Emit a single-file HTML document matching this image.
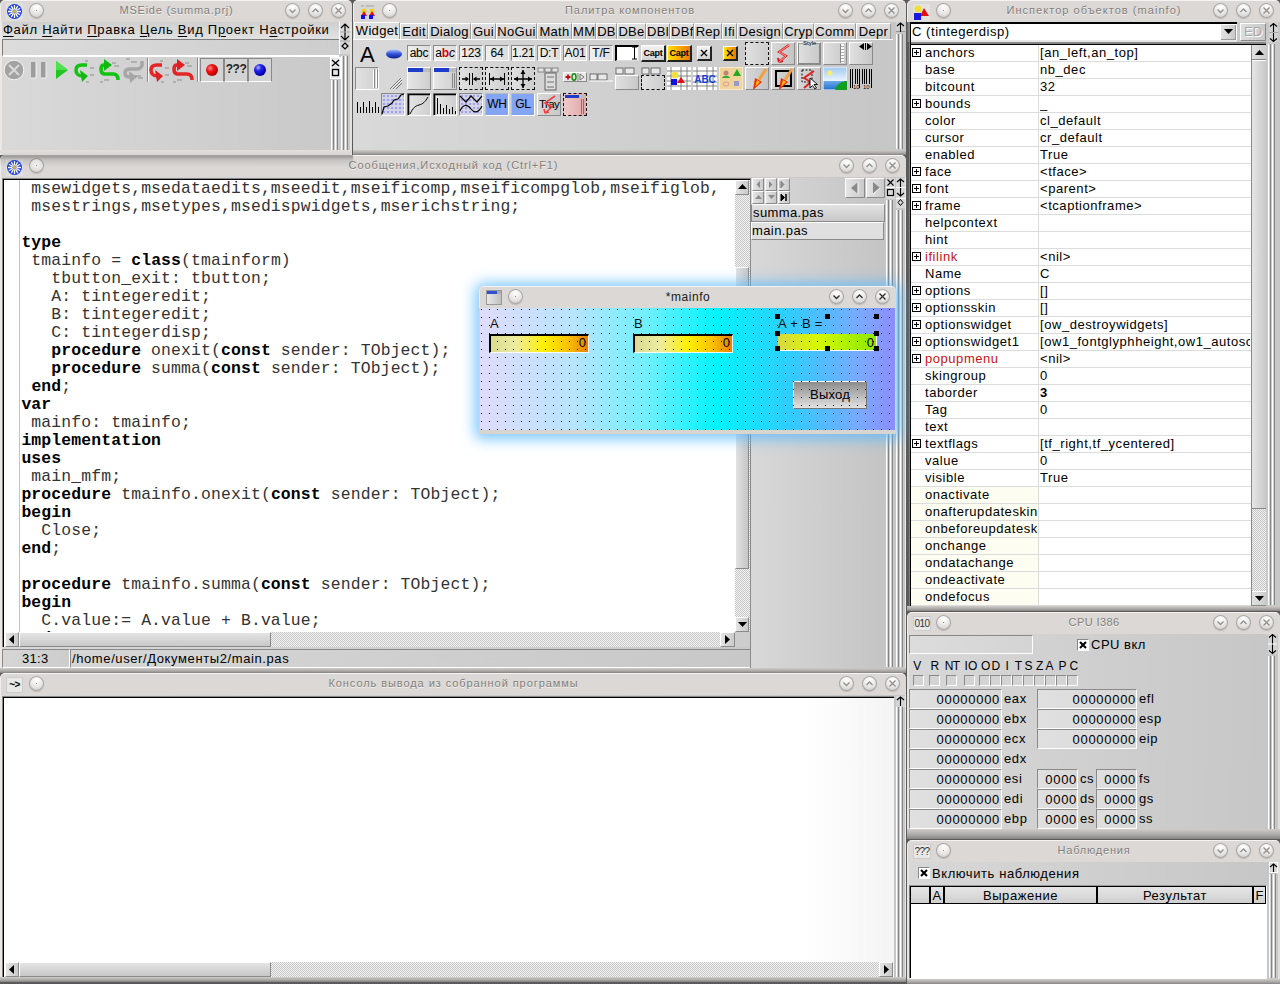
<!DOCTYPE html><html><head><meta charset="utf-8"><style>
*{margin:0;padding:0;box-sizing:border-box}
body{width:1280px;height:984px;overflow:hidden;background:#5a5a5a;font-family:"Liberation Sans",sans-serif;font-size:13px;color:#000;position:relative}
.a{position:absolute}
u{text-decoration:underline;text-underline-offset:2px}
.win{position:absolute;background:linear-gradient(90deg,#d6d6d6,#c9c9c9);overflow:hidden;border-radius:5px 5px 0 0}
.tb{position:absolute;left:0;top:0;right:0;height:22px;background:#dbd8d5;border-radius:5px 5px 0 0;border-top:1px solid #f4f3f2;border-left:1px solid #efeeec}
.tt{position:absolute;top:3.3px;left:0;right:0;text-align:center;color:#827e7b;font-size:11px;line-height:13px;letter-spacing:0.9px;text-shadow:0 1px 0 #f4f2f0;white-space:nowrap}
.cb{position:absolute;width:15px;height:15px;border-radius:50%;background:radial-gradient(circle at 50% 25%,#ffffff,#eceae8 45%,#d2d0ce 80%,#c4c2c0);box-shadow:0 0 0 1px #a8a6a4 inset,0 1px 1px rgba(0,0,0,0.15)}
.fb{position:absolute;left:0;right:0;bottom:0;background:linear-gradient(#cfccc9,#aaa8a6 60%,#858381)}
.mono{font-family:"Liberation Mono",monospace}
</style></head><body>
<div class="win" style="left:0;top:0;width:352px;height:155px;background:linear-gradient(90deg,#d9d9d9,#c8c8c8)"><div class="tb"><svg class="a" style="left:5px;top:2px" width="17" height="17" viewBox="0 0 17 17"><rect width="17" height="17" fill="#e0e0e0"/><circle cx="8.5" cy="8.5" r="7.5" fill="#1f3fd8"/><path d="M10.5 8.5L15.0 8.5" stroke="#fff" stroke-width="1.3"/><path d="M10.2 9.5L14.1 11.8" stroke="#fff" stroke-width="1.3"/><path d="M9.5 10.2L11.8 14.1" stroke="#fff" stroke-width="1.3"/><path d="M8.5 10.5L8.5 15.0" stroke="#fff" stroke-width="1.3"/><path d="M7.5 10.2L5.3 14.1" stroke="#fff" stroke-width="1.3"/><path d="M6.8 9.5L2.9 11.8" stroke="#fff" stroke-width="1.3"/><path d="M6.5 8.5L2.0 8.5" stroke="#fff" stroke-width="1.3"/><path d="M6.8 7.5L2.9 5.3" stroke="#fff" stroke-width="1.3"/><path d="M7.5 6.8L5.2 2.9" stroke="#fff" stroke-width="1.3"/><path d="M8.5 6.5L8.5 2.0" stroke="#fff" stroke-width="1.3"/><path d="M9.5 6.8L11.8 2.9" stroke="#fff" stroke-width="1.3"/><path d="M10.2 7.5L14.1 5.2" stroke="#fff" stroke-width="1.3"/><circle cx="8.5" cy="8.5" r="2" fill="#c8b040"/></svg><div class="cb" style="left:28.2px;top:2px"></div><div class="a" style="left:35px;top:9px;width:1px;height:1px;background:#888"></div><div class="tt" style="letter-spacing:0.76px">MSEide (summa.prj)</div><div class="cb" style="left:284px;top:2px"></div><svg class="a" style="left:284px;top:2px" width="15" height="15"><path d="M4.5 6.5L7.5 9.5L10.5 6.5" stroke="#8e8e8e" stroke-width="1.3" fill="none"/></svg><div class="cb" style="left:307px;top:2px"></div><svg class="a" style="left:307px;top:2px" width="15" height="15"><path d="M4.5 9L7.5 6L10.5 9" stroke="#8e8e8e" stroke-width="1.3" fill="none"/></svg><div class="cb" style="left:330px;top:2px"></div><svg class="a" style="left:330px;top:2px" width="15" height="15"><path d="M4.5 4.5L10.5 10.5M10.5 4.5L4.5 10.5" stroke="#8e8e8e" stroke-width="1.3" fill="none"/></svg></div><div class="a" style="left:0;top:22px;width:351px;height:17px;background:linear-gradient(#cfcfcf,#e2e2e2)"></div><div class="a ui" style="left:3px;top:22px;white-space:nowrap;font-size:13px;letter-spacing:0.72px;line-height:15px"><u>Ф</u>айл <u>Н</u>айти <u>П</u>равка <u>Ц</u>ель <u>В</u>ид П<u>р</u>оект Н<u>а</u>стройки</div><div class="a" style="left:339px;top:22px;width:11px;height:32px;background:#d8d8d8;border-left:1px solid #fff"></div><svg class="a" style="left:340px;top:23px" width="10" height="30" viewBox="0 0 10 30"><path d="M5 1V17M1 5L5 1L9 5M5 13V17M1 13L5 17L9 13" stroke="#000" stroke-width="1.2" fill="none"/><path d="M0 9H10M0 18H10" stroke="#aaa"/><path d="M5 20L8 23L5 26L2 23Z" stroke="#000" fill="none" stroke-width="1.2"/></svg><div class="a" style="left:2px;top:39px;width:337px;height:18px;background:linear-gradient(90deg,#dcdcdc,#cdcdcd);border-top:1px solid #7c7c7c;border-left:1px solid #7c7c7c;border-bottom:2px solid #fff"></div><svg class="a" style="left:0;top:56px" width="330" height="30" viewBox="0 0 330 30"><circle cx="14" cy="14" r="9.8" fill="#a3a3a3" stroke="#fff" stroke-width="0.8"/><path d="M9 9L19 19M19 9L9 19" stroke="#d9d9d9" stroke-width="2"/><rect x="31" y="6" width="5" height="16" fill="#9d9d9d"/><rect x="41" y="6" width="5" height="16" fill="#9d9d9d"/><path d="M36 6V22M46 6V22M31 22H36M41 22H46" stroke="#fff" stroke-width="0.8"/><path d="M56 5L68 14L56 23Z" fill="#22c522"/><path d="M56 5L68 14L56 14Z" fill="#4ee04e"/><path d="M87 9H82C77 9 76 12 76 14C76 17 78 20 82 20" stroke="#0fc40f" stroke-width="3.5" fill="none"/><path d="M80 14L88 20L82 26Z" fill="#10b910"/><path d="M85 5h3M90 12h4M90 19h4M86 26h3" stroke="#707070" stroke-width="0.7"/><path d="M104 9C100 9 100 17 104 18H113C117 18 118 21 118 24" stroke="#0fc40f" stroke-width="3.5" fill="none"/><path d="M104 3L112 9L104 15Z" fill="#10b910"/><path d="M112 7h4M114 10h5M100 26h3M104 24h5" stroke="#707070" stroke-width="0.7"/><path d="M142 5V9C142 11 140 13 136 13H130C126 13 125 15 125 17C125 20 127 21 130 21" stroke="#a6a6a6" stroke-width="3.5" fill="none"/><path d="M129 15L137 21L130 27Z" fill="#a6a6a6"/><path d="M126 3h4M131 6h6M135 20h6M138 22h5" stroke="#707070" stroke-width="0.7"/><path d="M147.5 2V26" stroke="#8a8a8a"/><path d="M148.5 2V26" stroke="#fff"/><path d="M162 9H157C152 9 151 12 151 14C151 17 153 20 157 20" stroke="#e52626" stroke-width="3.5" fill="none"/><path d="M155 14L163 20L157 26Z" fill="#dd2020"/><path d="M160 5h3M165 12h4M165 19h4M161 26h3" stroke="#707070" stroke-width="0.7"/><path d="M177 9C173 9 173 17 177 18H187C191 18 192 21 192 24" stroke="#e52626" stroke-width="3.5" fill="none"/><path d="M177 3L185 9L177 15Z" fill="#dd2020"/><path d="M185 7h4M187 10h5M173 26h3M177 24h5" stroke="#707070" stroke-width="0.7"/><path d="M197.5 2V26" stroke="#8a8a8a"/><path d="M198.5 2V26" stroke="#fff"/></svg><div class="a" style="left:200px;top:58px;width:24px;height:24px;border:1px solid #fff;border-right-color:#8a8a8a;border-bottom-color:#fff;border-top-color:#8a8a8a;border-left-color:#8a8a8a;background:#d3d3d3"></div><div class="a" style="left:224px;top:58px;width:24px;height:24px;border:1px solid #fff;border-right-color:#8a8a8a;border-bottom-color:#fff;border-top-color:#8a8a8a;border-left-color:#8a8a8a;background:#d3d3d3"></div><div class="a" style="left:248px;top:58px;width:24px;height:24px;border:1px solid #fff;border-right-color:#8a8a8a;border-bottom-color:#fff;border-top-color:#8a8a8a;border-left-color:#8a8a8a;background:#d3d3d3"></div><svg class="a" style="left:200px;top:58px" width="72" height="24" viewBox="0 0 72 24"><defs><radialGradient id="rg1" cx="0.35" cy="0.35" r="0.7"><stop offset="0" stop-color="#ff9090"/><stop offset="0.4" stop-color="#f01414"/><stop offset="1" stop-color="#b00000"/></radialGradient><radialGradient id="bg1" cx="0.35" cy="0.3" r="0.7"><stop offset="0" stop-color="#b0b0ff"/><stop offset="0.4" stop-color="#2222ee"/><stop offset="1" stop-color="#0000a0"/></radialGradient></defs><circle cx="12" cy="12" r="6" fill="url(#rg1)"/><circle cx="60" cy="12" r="6" fill="url(#bg1)"/></svg><div class="a" style="left:224px;top:62px;width:24px;text-align:center;font-weight:bold;font-size:12px;letter-spacing:-0.5px;color:#222">???</div><svg class="a" style="left:330px;top:57px" width="11" height="22" viewBox="0 0 11 22"><rect x="0.5" y="0.5" width="10" height="21" fill="#e8e8e8" stroke="#fff"/><path d="M2 3L9 9M9 3L2 9" stroke="#000" stroke-width="1.3"/><rect x="2.5" y="12.5" width="6" height="6" fill="none" stroke="#000" stroke-width="1.3"/></svg><div class="a" style="left:331px;top:80px;width:8px;height:70px;background:repeating-linear-gradient(90deg,#fff 0,#fff 1px,#d2d2d2 1px,#d2d2d2 2px,#858585 2px,#858585 3px,#cacaca 3px,#cacaca 4px)"></div><div class="a" style="left:341px;top:56px;width:8px;height:94px;background:repeating-linear-gradient(90deg,#fff 0,#fff 1px,#d2d2d2 1px,#d2d2d2 2px,#858585 2px,#858585 3px,#cacaca 3px,#cacaca 4px)"></div><div class="a" style="left:0;top:22px;width:2px;bottom:0;background:#ebe9e7"></div><div class="a" style="right:0;top:22px;width:2.5px;bottom:0;background:#e4e1de"></div><div class="a" style="left:0;right:0;bottom:0;height:5px;background:linear-gradient(#e2dfdc,#d8d4d1);border-radius:0 0 4px 4px"></div></div>
<div class="win" style="left:353px;top:0;width:553px;height:155px;background:linear-gradient(90deg,#d9d9d9,#c6c6c6)"><div class="tb"><svg class="a" style="left:6px;top:3px" width="17" height="17" viewBox="0 0 17 17"><rect width="17" height="17" fill="#d6d6d6"/><circle cx="4" cy="7" r="2.6" fill="#e8d030"/><circle cx="12" cy="7" r="2.6" fill="#e8d030"/><path d="M4 7L7 12H1Z" fill="#e01010"/><path d="M12 7L15 12H9Z" fill="#e01010"/><rect x="1" y="11" width="4" height="4" fill="#1010e0"/><rect x="9" y="11" width="4" height="4" fill="#1010e0"/><path d="M1 2h3M6 2h8" stroke="#999" stroke-width="0.8"/></svg><div class="cb" style="left:28.2px;top:2px"></div><div class="a" style="left:35px;top:9px;width:1px;height:1px;background:#888"></div><div class="tt" style="letter-spacing:0.9px">Палитра компонентов</div><div class="cb" style="left:484px;top:2px"></div><svg class="a" style="left:484px;top:2px" width="15" height="15"><path d="M4.5 6.5L7.5 9.5L10.5 6.5" stroke="#8e8e8e" stroke-width="1.3" fill="none"/></svg><div class="cb" style="left:507px;top:2px"></div><svg class="a" style="left:507px;top:2px" width="15" height="15"><path d="M4.5 9L7.5 6L10.5 9" stroke="#8e8e8e" stroke-width="1.3" fill="none"/></svg><div class="cb" style="left:530px;top:2px"></div><svg class="a" style="left:530px;top:2px" width="15" height="15"><path d="M4.5 4.5L10.5 10.5M10.5 4.5L4.5 10.5" stroke="#8e8e8e" stroke-width="1.3" fill="none"/></svg></div><div class="a" style="left:0;top:22px;width:540px;height:18px;border-bottom:1px solid #fff"></div><div class="a" style="left:1px;top:22px;width:46px;height:17px;background:linear-gradient(#dcdcdc,#e6e6e6);border-left:1px solid #fff;border-top:1px solid #fff;border-right:1px solid #9a9a9a;text-align:center;font-size:13px;line-height:16px;letter-spacing:0.3px;white-space:nowrap;overflow:hidden">Widget</div><div class="a" style="left:47px;top:23px;width:28px;height:16px;background:linear-gradient(#e0e0e0,#cfcfcf);border-left:1px solid #fff;border-top:1px solid #fff;border-right:1px solid #9a9a9a;text-align:center;font-size:13px;line-height:16px;letter-spacing:0.3px;white-space:nowrap;overflow:hidden">Edit</div><div class="a" style="left:75px;top:23px;width:43px;height:16px;background:linear-gradient(#e0e0e0,#cfcfcf);border-left:1px solid #fff;border-top:1px solid #fff;border-right:1px solid #9a9a9a;text-align:center;font-size:13px;line-height:16px;letter-spacing:0.3px;white-space:nowrap;overflow:hidden">Dialog</div><div class="a" style="left:118px;top:23px;width:25px;height:16px;background:linear-gradient(#e0e0e0,#cfcfcf);border-left:1px solid #fff;border-top:1px solid #fff;border-right:1px solid #9a9a9a;text-align:center;font-size:13px;line-height:16px;letter-spacing:0.3px;white-space:nowrap;overflow:hidden">Gui</div><div class="a" style="left:143px;top:23px;width:41px;height:16px;background:linear-gradient(#e0e0e0,#cfcfcf);border-left:1px solid #fff;border-top:1px solid #fff;border-right:1px solid #9a9a9a;text-align:center;font-size:13px;line-height:16px;letter-spacing:0.3px;white-space:nowrap;overflow:hidden">NoGui</div><div class="a" style="left:184px;top:23px;width:35px;height:16px;background:linear-gradient(#e0e0e0,#cfcfcf);border-left:1px solid #fff;border-top:1px solid #fff;border-right:1px solid #9a9a9a;text-align:center;font-size:13px;line-height:16px;letter-spacing:0.3px;white-space:nowrap;overflow:hidden">Math</div><div class="a" style="left:219px;top:23px;width:24px;height:16px;background:linear-gradient(#e0e0e0,#cfcfcf);border-left:1px solid #fff;border-top:1px solid #fff;border-right:1px solid #9a9a9a;text-align:center;font-size:13px;line-height:16px;letter-spacing:0.3px;white-space:nowrap;overflow:hidden">MM</div><div class="a" style="left:243px;top:23px;width:21px;height:16px;background:linear-gradient(#e0e0e0,#cfcfcf);border-left:1px solid #fff;border-top:1px solid #fff;border-right:1px solid #9a9a9a;text-align:center;font-size:13px;line-height:16px;letter-spacing:0.3px;white-space:nowrap;overflow:hidden">DB</div><div class="a" style="left:264px;top:23px;width:29px;height:16px;background:linear-gradient(#e0e0e0,#cfcfcf);border-left:1px solid #fff;border-top:1px solid #fff;border-right:1px solid #9a9a9a;text-align:center;font-size:13px;line-height:16px;letter-spacing:0.3px;white-space:nowrap;overflow:hidden">DBe</div><div class="a" style="left:293px;top:23px;width:24px;height:16px;background:linear-gradient(#e0e0e0,#cfcfcf);border-left:1px solid #fff;border-top:1px solid #fff;border-right:1px solid #9a9a9a;text-align:center;font-size:13px;line-height:16px;letter-spacing:0.3px;white-space:nowrap;overflow:hidden">DBl</div><div class="a" style="left:317px;top:23px;width:24px;height:16px;background:linear-gradient(#e0e0e0,#cfcfcf);border-left:1px solid #fff;border-top:1px solid #fff;border-right:1px solid #9a9a9a;text-align:center;font-size:13px;line-height:16px;letter-spacing:0.3px;white-space:nowrap;overflow:hidden">DBf</div><div class="a" style="left:341px;top:23px;width:28px;height:16px;background:linear-gradient(#e0e0e0,#cfcfcf);border-left:1px solid #fff;border-top:1px solid #fff;border-right:1px solid #9a9a9a;text-align:center;font-size:13px;line-height:16px;letter-spacing:0.3px;white-space:nowrap;overflow:hidden">Rep</div><div class="a" style="left:369px;top:23px;width:15px;height:16px;background:linear-gradient(#e0e0e0,#cfcfcf);border-left:1px solid #fff;border-top:1px solid #fff;border-right:1px solid #9a9a9a;text-align:center;font-size:13px;line-height:16px;letter-spacing:0.3px;white-space:nowrap;overflow:hidden">Ifi</div><div class="a" style="left:384px;top:23px;width:46px;height:16px;background:linear-gradient(#e0e0e0,#cfcfcf);border-left:1px solid #fff;border-top:1px solid #fff;border-right:1px solid #9a9a9a;text-align:center;font-size:13px;line-height:16px;letter-spacing:0.3px;white-space:nowrap;overflow:hidden">Design</div><div class="a" style="left:430px;top:23px;width:31px;height:16px;background:linear-gradient(#e0e0e0,#cfcfcf);border-left:1px solid #fff;border-top:1px solid #fff;border-right:1px solid #9a9a9a;text-align:center;font-size:13px;line-height:16px;letter-spacing:0.3px;white-space:nowrap;overflow:hidden">Cryp</div><div class="a" style="left:461px;top:23px;width:42px;height:16px;background:linear-gradient(#e0e0e0,#cfcfcf);border-left:1px solid #fff;border-top:1px solid #fff;border-right:1px solid #9a9a9a;text-align:center;font-size:13px;line-height:16px;letter-spacing:0.3px;white-space:nowrap;overflow:hidden">Comm</div><div class="a" style="left:503px;top:23px;width:35px;height:16px;background:linear-gradient(#e0e0e0,#cfcfcf);border-left:1px solid #fff;border-top:1px solid #fff;border-right:1px solid #9a9a9a;text-align:center;font-size:13px;line-height:16px;letter-spacing:0.3px;white-space:nowrap;overflow:hidden">Depr</div><div class="a" style="left:543px;top:22px;width:9px;height:10px;background:#d0d0d0;border-bottom:1px solid #999"></div><svg class="a" style="left:543px;top:22px" width="9" height="10"><path d="M4.5 1V10M1 4L4.5 1L8 4" stroke="#000" stroke-width="1.1" fill="none"/></svg><div class="a" style="left:543px;top:34px;width:8px;height:115px;background:repeating-linear-gradient(90deg,#fff 0,#fff 1px,#d2d2d2 1px,#d2d2d2 2px,#858585 2px,#858585 3px,#cacaca 3px,#cacaca 4px)"></div><div class="a" style="left:7px;top:44px;font-size:22px;white-space:nowrap;line-height:1;font-weight:normal">A</div><svg class="a" style="left:32px;top:48px" width="18" height="12"><defs><linearGradient id="el" x1="0" y1="0" x2="0" y2="1"><stop offset="0" stop-color="#a8c0ff"/><stop offset="0.5" stop-color="#3050d8"/><stop offset="1" stop-color="#0a2090"/></linearGradient></defs><ellipse cx="9" cy="6" rx="8" ry="4.5" fill="url(#el)"/></svg><div class="a" style="left:54px;top:45px;width:24px;height:16px;background:linear-gradient(90deg,#f0f0f0,#dcdcdc);border-top:1px solid #8a8a8a;border-left:1px solid #8a8a8a;border-right:1px solid #fff;border-bottom:1px solid #fff"><div style="text-align:center;font-size:12px;line-height:14px;letter-spacing:-0.2px">abc</div></div><div class="a" style="left:80px;top:45px;width:24px;height:16px;background:linear-gradient(90deg,#f0f0f0,#dcdcdc);border-top:1px solid #8a8a8a;border-left:1px solid #8a8a8a;border-right:1px solid #fff;border-bottom:1px solid #fff"><div style="text-align:center;font-size:12px;line-height:14px;letter-spacing:-0.2px">a<b style="color:#e00000">b</b><i>c</i></div></div><div class="a" style="left:106px;top:45px;width:24px;height:16px;background:linear-gradient(90deg,#f0f0f0,#dcdcdc);border-top:1px solid #8a8a8a;border-left:1px solid #8a8a8a;border-right:1px solid #fff;border-bottom:1px solid #fff"><div style="text-align:center;font-size:12px;line-height:14px;letter-spacing:-0.2px">123</div></div><div class="a" style="left:132px;top:45px;width:24px;height:16px;background:linear-gradient(90deg,#f0f0f0,#dcdcdc);border-top:1px solid #8a8a8a;border-left:1px solid #8a8a8a;border-right:1px solid #fff;border-bottom:1px solid #fff"><div style="text-align:center;font-size:12px;line-height:14px;letter-spacing:-0.2px">64</div></div><div class="a" style="left:158px;top:45px;width:24px;height:16px;background:linear-gradient(90deg,#f0f0f0,#dcdcdc);border-top:1px solid #8a8a8a;border-left:1px solid #8a8a8a;border-right:1px solid #fff;border-bottom:1px solid #fff"><div style="text-align:center;font-size:12px;line-height:14px;letter-spacing:-0.2px">1.21</div></div><div class="a" style="left:184px;top:45px;width:24px;height:16px;background:linear-gradient(90deg,#f0f0f0,#dcdcdc);border-top:1px solid #8a8a8a;border-left:1px solid #8a8a8a;border-right:1px solid #fff;border-bottom:1px solid #fff"><div style="text-align:center;font-size:12px;line-height:14px;letter-spacing:-0.2px">D:T</div></div><div class="a" style="left:210px;top:45px;width:24px;height:16px;background:linear-gradient(90deg,#f0f0f0,#dcdcdc);border-top:1px solid #8a8a8a;border-left:1px solid #8a8a8a;border-right:1px solid #fff;border-bottom:1px solid #fff"><div style="text-align:center;font-size:12px;line-height:14px;letter-spacing:-0.2px">A01</div></div><div class="a" style="left:236px;top:45px;width:24px;height:16px;background:linear-gradient(90deg,#f0f0f0,#dcdcdc);border-top:1px solid #8a8a8a;border-left:1px solid #8a8a8a;border-right:1px solid #fff;border-bottom:1px solid #fff"><div style="text-align:center;font-size:12px;line-height:14px;letter-spacing:-0.2px">T/F</div></div><div class="a" style="left:262px;top:45px;width:24px;height:16px;background:#fff;border-top:2px solid #000;border-left:2px solid #000;border-bottom:1px solid #ddd;border-right:1px solid #ddd"></div><svg class="a" style="left:279px;top:46px" width="5" height="14"><path d="M0 1H5M0 13H5M2.5 1V13" stroke="#000" stroke-width="1"/></svg><div class="a" style="left:288px;top:45px;width:25px;height:17px;background:linear-gradient(#f2f2f2,#d0d0d0);border:1px solid #fff;border-right:2px solid #222;border-bottom:2px solid #222;font-size:9px;font-weight:bold;letter-spacing:-0.2px;text-align:center;line-height:14px">Capt</div><div class="a" style="left:314px;top:45px;width:25px;height:17px;background:linear-gradient(90deg,#ffe000,#f07800);border:1px solid #fff;border-right:2px solid #222;border-bottom:2px solid #222;font-size:9px;font-weight:bold;letter-spacing:-0.2px;text-align:center;line-height:14px">Capt</div><div class="a" style="left:344px;top:46px;width:15px;height:15px;background:linear-gradient(#f2f2f2,#d0d0d0);border:1px solid #fff;border-right:2px solid #222;border-bottom:2px solid #222"></div><svg class="a" style="left:346px;top:48px" width="10" height="10"><path d="M2 2L8 8M8 2L2 8" stroke="#000" stroke-width="1.3"/></svg><div class="a" style="left:370px;top:46px;width:15px;height:15px;background:linear-gradient(90deg,#ffe000,#f07800);border:1px solid #fff;border-right:2px solid #222;border-bottom:2px solid #222"></div><svg class="a" style="left:372px;top:48px" width="10" height="10"><path d="M2 2L8 8M8 2L2 8" stroke="#000" stroke-width="1.3"/></svg><div class="a" style="left:392px;top:42px;width:24px;height:23px;background:linear-gradient(90deg,#e0e0e0,#cdcdcd);border:1.6px dashed #111"></div><div class="a" style="left:418px;top:42px;width:24px;height:23px;background:linear-gradient(90deg,#d8d8d8,#c4c4c4);border-top:1px solid #fff;border-left:1px solid #fff;border-right:1px solid #8a8a8a;border-bottom:1px solid #8a8a8a"></div><svg class="a" style="left:420px;top:43px" width="20" height="21"><path d="M16 2L6 9L13 13L6 19M6 19L5 15M6 19L10 18" stroke="#e02020" stroke-width="2.2" fill="none"/><path d="M16 2L6 9L13 13L6 19" stroke="#fbb" stroke-width="0.8" fill="none"/></svg><div class="a" style="left:444px;top:42px;width:24px;height:23px;background:linear-gradient(90deg,#e0e0e0,#c8c8c8);border-top:1px solid #fff;border-left:1px solid #fff;border-right:1px solid #8a8a8a;border-bottom:1px solid #8a8a8a"></div><div class="a" style="left:445px;top:43px;width:22px;height:21px;border:1px solid #888;border-top:1px solid #999"></div><div class="a" style="left:450px;top:40px;font-size:6px;background:#d6d6d6">Style</div><div class="a" style="left:470px;top:42px;width:24px;height:23px;background:linear-gradient(90deg,#e0e0e0,#c8c8c8);border-top:1px solid #fff;border-left:1px solid #fff;border-right:1px solid #8a8a8a;border-bottom:1px solid #8a8a8a"></div><div class="a" style="left:487px;top:44px;width:4px;height:19px;border-left:1px solid #888;background:repeating-linear-gradient(#fff 0,#fff 2px,#aaa 2px,#aaa 3px)"></div><div class="a" style="left:496px;top:42px;width:24px;height:23px;background:linear-gradient(90deg,#e0e0e0,#c8c8c8);border-top:1px solid #fff;border-left:1px solid #fff;border-right:1px solid #8a8a8a;border-bottom:1px solid #8a8a8a"></div><svg class="a" style="left:506px;top:43px" width="13" height="7"><path d="M0 3.5L5 0V7Z M13 3.5L8 0V7Z" fill="#000"/><path d="M6.5 0V7" stroke="#000"/></svg><div class="a" style="left:2px;top:67px;width:24px;height:23px;background:linear-gradient(90deg,#e2e2e2,#cfcfcf);border-top:1px solid #8a8a8a;border-left:1px solid #8a8a8a;border-right:1px solid #fff;border-bottom:1px solid #fff"></div><div class="a" style="left:20px;top:69px;width:5px;height:19px;background:repeating-linear-gradient(90deg,#fff 0,#fff 1px,#888 1px,#888 2px,#ddd 2px,#ddd 3px)"></div><svg class="a" style="left:36px;top:77px" width="14" height="13"><path d="M1 12L12 1M4 12L13 3M7 12L13 6" stroke="#666" stroke-width="0.9"/><path d="M2 12L13 1M5 12L13 4" stroke="#fff" stroke-width="0.6"/></svg><div class="a" style="left:54px;top:67px;width:24px;height:23px;background:linear-gradient(90deg,#e6e6e6,#cfcfcf);border-top:1px solid #fff;border-left:1px solid #fff;border-right:1px solid #8a8a8a;border-bottom:1px solid #8a8a8a"></div><div class="a" style="left:55px;top:68px;width:22px;height:4px;background:linear-gradient(90deg,#1e3ccc 70%,#bbb 70%)"></div><div class="a" style="left:80px;top:67px;width:24px;height:23px;background:linear-gradient(90deg,#e6e6e6,#cfcfcf);border-top:1px solid #fff;border-left:1px solid #fff;border-right:1px solid #8a8a8a;border-bottom:1px solid #8a8a8a"></div><div class="a" style="left:81px;top:68px;width:22px;height:4px;background:linear-gradient(90deg,#1e3ccc 70%,#bbb 70%)"></div><div class="a" style="left:99px;top:73px;width:3px;height:15px;border-left:1px solid #888;border-right:1px solid #888"></div><div class="a" style="left:106px;top:67px;width:24px;height:23px;background:linear-gradient(90deg,#e0e0e0,#cdcdcd);border:1.6px dashed #111"></div><div class="a" style="left:132px;top:67px;width:24px;height:23px;background:linear-gradient(90deg,#e0e0e0,#cdcdcd);border:1.6px dashed #111"></div><div class="a" style="left:158px;top:67px;width:24px;height:23px;background:linear-gradient(90deg,#e0e0e0,#cdcdcd);border:1.6px dashed #111"></div><svg class="a" style="left:108px;top:69px" width="20" height="20"><path d="M1 10H6M14 10H19" stroke="#000" stroke-width="1.3"/><path d="M8.5 4V16M11.5 4V16" stroke="#000" stroke-width="1"/><path d="M8 10L4.5 7.5V12.5ZM12 10L15.5 7.5V12.5Z" fill="#000"/></svg><svg class="a" style="left:134px;top:69px" width="20" height="20"><path d="M2.5 4V16M17.5 4V16" stroke="#000" stroke-width="1"/><path d="M3 10H17" stroke="#000" stroke-width="1.3"/><path d="M3 10L7 7.5V12.5ZM17 10L13 7.5V12.5Z" fill="#000"/></svg><svg class="a" style="left:160px;top:69px" width="20" height="20"><path d="M10 1V19M1 10H19" stroke="#000" stroke-width="1.3"/><path d="M10 1L7.5 5H12.5ZM10 19L7.5 15H12.5ZM1 10L5 7.5V12.5ZM19 10L15 7.5V12.5Z" fill="#000"/></svg><svg class="a" style="left:184px;top:67px" width="22" height="24"><rect x="1" y="1" width="6" height="4" fill="#e4e4e4" stroke="#666" stroke-width="0.7"/><rect x="8" y="1" width="6" height="4" fill="#e4e4e4" stroke="#666" stroke-width="0.7"/><rect x="15" y="1" width="6" height="4" fill="#e4e4e4" stroke="#666" stroke-width="0.7"/><rect x="8" y="6" width="11" height="17" fill="#ddd" stroke="#555" stroke-width="0.9"/><path d="M10 10h7M10 15h7M10 20h7" stroke="#555" stroke-width="0.8"/></svg><div class="a" style="left:210px;top:72px;width:24px;height:10px;background:#e6e6e6;border:1px solid #fff;border-right-color:#888;border-bottom-color:#888"></div><svg class="a" style="left:211px;top:72px" width="22" height="10"><path d="M1.5 5H6.5M4 2.5V7.5" stroke="#c01010" stroke-width="1.8"/><ellipse cx="10" cy="5" rx="2" ry="3.2" stroke="#109010" stroke-width="1.5" fill="none"/><path d="M14 1V9" stroke="#888"/><path d="M16 2L20 5L16 8Z" fill="none" stroke="#777"/></svg><svg class="a" style="left:236px;top:73px" width="24" height="10"><rect x="1" y="1" width="7" height="6" fill="#e8e8e8" stroke="#555" stroke-width="0.8"/><rect x="9" y="1" width="9" height="6" fill="#e8e8e8" stroke="#555" stroke-width="0.8"/><path d="M1 8H24" stroke="#fff"/></svg><svg class="a" style="left:262px;top:67px" width="26" height="8"><rect x="1" y="1" width="7" height="6" fill="#e8e8e8" stroke="#555" stroke-width="0.8"/><rect x="10" y="1" width="9" height="6" fill="#e8e8e8" stroke="#555" stroke-width="0.8"/></svg><div class="a" style="left:262px;top:75px;width:24px;height:15px;background:linear-gradient(90deg,#e0e0e0,#c8c8c8);border-top:1px solid #fff;border-left:1px solid #fff;border-right:1px solid #8a8a8a;border-bottom:1px solid #8a8a8a"></div><svg class="a" style="left:288px;top:67px" width="26" height="8"><rect x="1" y="1" width="7" height="6" fill="#e8e8e8" stroke="#555" stroke-width="0.8"/><rect x="10" y="1" width="9" height="6" fill="#e8e8e8" stroke="#555" stroke-width="0.8"/></svg><div class="a" style="left:288px;top:75px;width:24px;height:15px;background:linear-gradient(90deg,#e0e0e0,#cdcdcd);border:1.6px dashed #111"></div><svg class="a" style="left:314px;top:67px" width="24" height="23"><rect width="24" height="23" fill="#fff"/><path d="M0 4H24M0 9H24M0 14H24M0 19H24M4 0V23M14 0V23M20 0V23" stroke="#777" stroke-width="0.9"/><circle cx="8" cy="8" r="3.5" fill="#f0e040"/><path d="M14 10L18 16H10Z" fill="#e01010"/><rect x="4" y="12" width="6" height="6" fill="#1010e0"/></svg><svg class="a" style="left:340px;top:67px" width="24" height="23"><rect width="24" height="23" fill="#fff"/><path d="M0 4H24M0 9H24M0 15H24M0 19H24M4 0V23M14 0V23M20 0V23" stroke="#777" stroke-width="0.9"/></svg><div class="a" style="left:340px;top:75px;width:24px;text-align:center;font-size:10px;font-weight:bold;color:#1840d8;line-height:10px">ABC</div><svg class="a" style="left:366px;top:67px" width="24" height="23"><rect width="24" height="23" fill="#f0d49a" stroke="#fff"/><circle cx="7" cy="6" r="2.5" fill="#c08080"/><path d="M3 11C4 8 10 8 11 11Z" fill="#3a3"/><path d="M18 2L14 9H22Z" fill="#2a2"/><ellipse cx="7" cy="17" rx="3" ry="2" stroke="#d99" fill="none"/><rect x="15" y="14" width="5" height="5" fill="#99c"/></svg><div class="a" style="left:392px;top:67px;width:24px;height:23px;background:linear-gradient(90deg,#d6d6d6,#c4c4c4);border-top:1px solid #fff;border-left:1px solid #fff;border-right:1px solid #8a8a8a;border-bottom:1px solid #8a8a8a"></div><svg class="a" style="left:394px;top:68px" width="22" height="22"><path d="M19 1L12 12" stroke="#f0a040" stroke-width="3"/><path d="M8 10L15 14L6 22Z" fill="#f02800"/><path d="M10 12L13 14L8 19Z" fill="#ffc000"/></svg><div class="a" style="left:418px;top:67px;width:24px;height:23px;background:linear-gradient(90deg,#d6d6d6,#c4c4c4);border-top:1px solid #fff;border-left:1px solid #fff;border-right:1px solid #8a8a8a;border-bottom:1px solid #8a8a8a"></div><div class="a" style="left:422px;top:70px;width:17px;height:17px;border:2px solid #000"></div><svg class="a" style="left:420px;top:68px" width="22" height="22"><path d="M19 1L12 12" stroke="#f0a040" stroke-width="3"/><path d="M8 10L15 14L6 22Z" fill="#f02800"/><path d="M10 12L13 14L8 19Z" fill="#ffc000"/></svg><div class="a" style="left:444px;top:67px;width:24px;height:23px;background:linear-gradient(90deg,#d6d6d6,#c4c4c4);border-top:1px solid #fff;border-left:1px solid #fff;border-right:1px solid #8a8a8a;border-bottom:1px solid #8a8a8a"></div><svg class="a" style="left:445px;top:68px" width="22" height="22"><rect x="4" y="2" width="10" height="12" fill="none" stroke="#111" stroke-dasharray="2 1.5"/><path d="M16 3L6 10L13 14L6 20" stroke="#e02020" stroke-width="2" fill="none"/><path d="M12 10L12 20L14.5 17.5L17 21L18.5 20L16 16.5H19.5Z" fill="#fff" stroke="#000" stroke-width="0.9"/></svg><svg class="a" style="left:470px;top:67px" width="24" height="23"><defs><linearGradient id="sky" x1="0" y1="0" x2="0" y2="1"><stop offset="0" stop-color="#a0c8f0"/><stop offset="0.6" stop-color="#e8f4ff"/><stop offset="0.62" stop-color="#6aa8e8"/><stop offset="1" stop-color="#2070d0"/></linearGradient></defs><rect width="24" height="23" fill="url(#sky)" stroke="#fff"/><circle cx="7" cy="6" r="2.5" fill="#f8f060"/><path d="M12 23C14 16 20 14 24 14V23Z" fill="#10a020"/></svg><svg class="a" style="left:496px;top:69px" width="24" height="20" shape-rendering="crispEdges"><path d="M1.5 0V19M3.5 0V19M6.5 0V15M8.5 0V15M10.5 0V19M13.5 0V15M15.5 0V19M17.5 0V15M20.5 0V15M22.5 0V19" stroke="#000" stroke-width="1"/><rect x="4" y="15" width="5" height="5" fill="#d0d0d0"/><rect x="14" y="15" width="6" height="5" fill="#d0d0d0"/><text x="4" y="20" font-size="6" font-family="Liberation Sans">10</text><text x="14" y="20" font-size="6" font-family="Liberation Sans">10</text></svg><svg class="a" style="left:3px;top:93px" width="24" height="23" shape-rendering="crispEdges"><path d="M1.5 20V9M4.5 20V14M7.5 20V9M10.5 20V14M13.5 20V8M16.5 20V14M19.5 20V9M22.5 20V14" stroke="#000" stroke-width="1.2"/></svg><div class="a" style="left:28px;top:93px;width:24px;height:23px;background-color:#d4d4e4;background-image:radial-gradient(circle,#9aa0ff 1.1px,transparent 1.3px);background-size:4px 4px;border:1px solid #fff;border-top-color:#888;border-left-color:#888"></div><svg class="a" style="left:28px;top:93px" width="24" height="23"><path d="M1 21L3 14L7 13L11 10L13 7L17 6L20 2L23 1" stroke="#000" stroke-width="1.2" fill="none"/></svg><div class="a" style="left:54px;top:93px;width:24px;height:23px;background:linear-gradient(90deg,#e6e6e6,#cfcfcf);border-top:1px solid #8a8a8a;border-left:1px solid #8a8a8a;border-right:1px solid #fff;border-bottom:1px solid #fff"></div><svg class="a" style="left:54px;top:93px" width="24" height="23"><path d="M1.5 22V1.5H23" stroke="#000" stroke-width="1.6" fill="none"/><path d="M3 21C6 15 8 13 12 12C16 11 18 9 21 4" stroke="#000" stroke-width="1" fill="none"/></svg><div class="a" style="left:80px;top:93px;width:24px;height:23px;background:linear-gradient(90deg,#e6e6e6,#cfcfcf);border-top:1px solid #8a8a8a;border-left:1px solid #8a8a8a;border-right:1px solid #fff;border-bottom:1px solid #fff"></div><svg class="a" style="left:80px;top:93px" width="24" height="23"><path d="M1.5 22V1.5H23" stroke="#000" stroke-width="1.6" fill="none"/><path d="M4.5 21V5M7.5 21V11M10.5 21V15M13.5 21V12M16.5 21V16M19.5 21V14M22 21V18" stroke="#000" stroke-width="1" shape-rendering="crispEdges"/></svg><div class="a" style="left:106px;top:93px;width:24px;height:23px;background-color:#d4d4e4;background-image:radial-gradient(circle,#9aa0ff 1.1px,transparent 1.3px);background-size:4px 4px;border:1px solid #fff;border-top-color:#888;border-left-color:#888"></div><svg class="a" style="left:106px;top:93px" width="24" height="23"><path d="M1 3L7 9L12 3L18 9L23 3M1 18C4 11 8 11 12 16C16 21 20 19 23 13" stroke="#000" stroke-width="1.2" fill="none"/></svg><div class="a" style="left:132px;top:93px;width:24px;height:23px;background:#84a4f4;border:1px solid #fff;border-top-color:#bbb;border-left-color:#bbb;font-size:12px;text-align:center;line-height:21px;letter-spacing:-0.3px">WH</div><div class="a" style="left:158px;top:93px;width:24px;height:23px;background:#84a4f4;border:1px solid #fff;border-top-color:#bbb;border-left-color:#bbb;font-size:12px;text-align:center;line-height:21px;letter-spacing:-0.3px">GL</div><div class="a" style="left:184px;top:93px;width:24px;height:23px;background:linear-gradient(90deg,#d8d8d8,#c8c8c8);border-top:1px solid #fff;border-left:1px solid #fff;border-right:1px solid #8a8a8a;border-bottom:1px solid #8a8a8a"></div><div class="a" style="left:184px;top:97px;width:24px;text-align:center;font-size:11.5px;letter-spacing:-0.6px;line-height:14px">Tray</div><svg class="a" style="left:186px;top:94px" width="20" height="22"><path d="M16 2L6 9L13 13L6 19M6 19L5 15M6 19L10 18" stroke="#f04040" stroke-width="1.6" fill="none"/></svg><div class="a" style="left:210px;top:93px;width:24px;height:23px;background:linear-gradient(90deg,#f0c8c8,#e0a8a8);border:1.6px dashed #111"></div><div class="a" style="left:212px;top:95px;width:20px;height:3px;background:linear-gradient(90deg,#1e3ccc 70%,#bbb 70%)"></div><div class="a" style="left:228px;top:99px;width:3px;height:15px;border-left:1px solid #777;border-right:1px solid #777"></div><div class="fb" style="height:5px"></div></div>
<div class="win" style="left:907px;top:0;width:373px;height:611px;background:linear-gradient(90deg,#d6d6d6,#c8c8c8)"><div class="tb"><svg class="a" style="left:5px;top:3px" width="17" height="17" viewBox="0 0 17 17"><rect width="17" height="17" fill="#e4e2e0"/><circle cx="5" cy="5" r="3.5" fill="#f0e030"/><path d="M11 4L16 12H7Z" fill="#e81010"/><rect x="1" y="9" width="7" height="7" fill="#1818e0"/></svg><div class="cb" style="left:28.2px;top:2px"></div><div class="a" style="left:35px;top:9px;width:1px;height:1px;background:#888"></div><div class="tt" style="letter-spacing:1.04px">Инспектор объектов (mainfo)</div><div class="cb" style="left:305px;top:2px"></div><svg class="a" style="left:305px;top:2px" width="15" height="15"><path d="M4.5 6.5L7.5 9.5L10.5 6.5" stroke="#8e8e8e" stroke-width="1.3" fill="none"/></svg><div class="cb" style="left:328px;top:2px"></div><svg class="a" style="left:328px;top:2px" width="15" height="15"><path d="M4.5 9L7.5 6L10.5 9" stroke="#8e8e8e" stroke-width="1.3" fill="none"/></svg><div class="cb" style="left:351px;top:2px"></div><svg class="a" style="left:351px;top:2px" width="15" height="15"><path d="M4.5 4.5L10.5 10.5M10.5 4.5L4.5 10.5" stroke="#8e8e8e" stroke-width="1.3" fill="none"/></svg></div><div class="a" style="left:0;top:22px;width:330px;height:20px;background:linear-gradient(90deg,#6a6a6a 0,#6a6a6a 1.5px,#8a8a8a 1.5px,#8a8a8a 3px,#000 3px,#000 4px,transparent 4px),linear-gradient(#000 0,#000 1.5px,#fff 1.5px,#fff 18px,#e8e8e8 18px)"></div><div class="a" style="left:5px;top:23px;font-size:13px;letter-spacing:0.55px;line-height:17px;white-space:nowrap">C (tintegerdisp)</div><div class="a" style="left:314px;top:25px;width:15px;height:15px;background:linear-gradient(90deg,#e2e2e2,#cacaca);border-right:1px solid #999;border-bottom:1px solid #999"></div><svg class="a" style="left:317px;top:29px" width="9" height="6"><path d="M0 0H9L4.5 5Z" fill="#000"/></svg><div class="a" style="left:333px;top:23px;width:26px;height:18px;background:linear-gradient(90deg,#dedede,#c8c8c8);border:1px solid #fff;border-right-color:#8a8a8a;border-bottom-color:#8a8a8a;color:#a8a8a8;font-size:13px;text-align:center;line-height:16px;text-shadow:1px 1px 0 #fff">ED</div><div class="a" style="left:362px;top:22px;width:9px;height:20px;background:#d4d4d4"></div><svg class="a" style="left:362px;top:23px" width="9" height="19"><path d="M4.5 0.5V18.5M1 3.5L4.5 0.5L8 3.5M1 15.5L4.5 18.5L8 15.5" stroke="#000" stroke-width="1.1" fill="none"/><path d="M0 9.5H9" stroke="#aaa"/></svg><div class="a" style="left:0;top:42px;width:359px;height:564px;background:linear-gradient(90deg,#5c5c5c 0,#5c5c5c 1.5px,#808080 1.5px,#808080 3px,#000 3px,#000 4px,transparent 4px),linear-gradient(#888 0,#888 2px,#000 2px,#000 3px,#fff 3px)"></div><div class="a" style="left:4px;top:45px;width:355px;height:561px;background:#fff;overflow:hidden"><div class="a" style="left:0;top:0px;width:127px;height:16px;background:#fff"></div><div class="a" style="left:0;top:16px;width:343px;height:1px;background:#dcdcdc"></div><svg class="a" style="left:1px;top:3px" width="9" height="9"><rect x="0.5" y="0.5" width="8" height="8" fill="none" stroke="#000"/><path d="M2 4.5H7M4.5 2V7" stroke="#000"/></svg><div class="a" style="left:14px;top:-1px;width:113px;overflow:hidden;font-size:13px;letter-spacing:0.55px;line-height:17px;white-space:nowrap;color:#000">anchors</div><div class="a" style="left:129px;top:-1px;width:210px;overflow:hidden;font-size:13px;letter-spacing:0.55px;line-height:17px;white-space:nowrap">[an_left,an_top]</div><div class="a" style="left:0;top:17px;width:127px;height:16px;background:#fff"></div><div class="a" style="left:0;top:33px;width:343px;height:1px;background:#dcdcdc"></div><div class="a" style="left:14px;top:16px;width:113px;overflow:hidden;font-size:13px;letter-spacing:0.55px;line-height:17px;white-space:nowrap;color:#000">base</div><div class="a" style="left:129px;top:16px;width:210px;overflow:hidden;font-size:13px;letter-spacing:0.55px;line-height:17px;white-space:nowrap">nb_dec</div><div class="a" style="left:0;top:34px;width:127px;height:16px;background:#fff"></div><div class="a" style="left:0;top:50px;width:343px;height:1px;background:#dcdcdc"></div><div class="a" style="left:14px;top:33px;width:113px;overflow:hidden;font-size:13px;letter-spacing:0.55px;line-height:17px;white-space:nowrap;color:#000">bitcount</div><div class="a" style="left:129px;top:33px;width:210px;overflow:hidden;font-size:13px;letter-spacing:0.55px;line-height:17px;white-space:nowrap">32</div><div class="a" style="left:0;top:51px;width:127px;height:16px;background:#fff"></div><div class="a" style="left:0;top:67px;width:343px;height:1px;background:#dcdcdc"></div><svg class="a" style="left:1px;top:54px" width="9" height="9"><rect x="0.5" y="0.5" width="8" height="8" fill="none" stroke="#000"/><path d="M2 4.5H7M4.5 2V7" stroke="#000"/></svg><div class="a" style="left:14px;top:50px;width:113px;overflow:hidden;font-size:13px;letter-spacing:0.55px;line-height:17px;white-space:nowrap;color:#000">bounds</div><div class="a" style="left:129px;top:50px;width:210px;overflow:hidden;font-size:13px;letter-spacing:0.55px;line-height:17px;white-space:nowrap">_</div><div class="a" style="left:0;top:68px;width:127px;height:16px;background:#fff"></div><div class="a" style="left:0;top:84px;width:343px;height:1px;background:#dcdcdc"></div><div class="a" style="left:14px;top:67px;width:113px;overflow:hidden;font-size:13px;letter-spacing:0.55px;line-height:17px;white-space:nowrap;color:#000">color</div><div class="a" style="left:129px;top:67px;width:210px;overflow:hidden;font-size:13px;letter-spacing:0.55px;line-height:17px;white-space:nowrap">cl_default</div><div class="a" style="left:0;top:85px;width:127px;height:16px;background:#fff"></div><div class="a" style="left:0;top:101px;width:343px;height:1px;background:#dcdcdc"></div><div class="a" style="left:14px;top:84px;width:113px;overflow:hidden;font-size:13px;letter-spacing:0.55px;line-height:17px;white-space:nowrap;color:#000">cursor</div><div class="a" style="left:129px;top:84px;width:210px;overflow:hidden;font-size:13px;letter-spacing:0.55px;line-height:17px;white-space:nowrap">cr_default</div><div class="a" style="left:0;top:102px;width:127px;height:16px;background:#fff"></div><div class="a" style="left:0;top:118px;width:343px;height:1px;background:#dcdcdc"></div><div class="a" style="left:14px;top:101px;width:113px;overflow:hidden;font-size:13px;letter-spacing:0.55px;line-height:17px;white-space:nowrap;color:#000">enabled</div><div class="a" style="left:129px;top:101px;width:210px;overflow:hidden;font-size:13px;letter-spacing:0.55px;line-height:17px;white-space:nowrap">True</div><div class="a" style="left:0;top:119px;width:127px;height:16px;background:#fff"></div><div class="a" style="left:0;top:135px;width:343px;height:1px;background:#dcdcdc"></div><svg class="a" style="left:1px;top:122px" width="9" height="9"><rect x="0.5" y="0.5" width="8" height="8" fill="none" stroke="#000"/><path d="M2 4.5H7M4.5 2V7" stroke="#000"/></svg><div class="a" style="left:14px;top:118px;width:113px;overflow:hidden;font-size:13px;letter-spacing:0.55px;line-height:17px;white-space:nowrap;color:#000">face</div><div class="a" style="left:129px;top:118px;width:210px;overflow:hidden;font-size:13px;letter-spacing:0.55px;line-height:17px;white-space:nowrap">&lt;tface&gt;</div><div class="a" style="left:0;top:136px;width:127px;height:16px;background:#fff"></div><div class="a" style="left:0;top:152px;width:343px;height:1px;background:#dcdcdc"></div><svg class="a" style="left:1px;top:139px" width="9" height="9"><rect x="0.5" y="0.5" width="8" height="8" fill="none" stroke="#000"/><path d="M2 4.5H7M4.5 2V7" stroke="#000"/></svg><div class="a" style="left:14px;top:135px;width:113px;overflow:hidden;font-size:13px;letter-spacing:0.55px;line-height:17px;white-space:nowrap;color:#000">font</div><div class="a" style="left:129px;top:135px;width:210px;overflow:hidden;font-size:13px;letter-spacing:0.55px;line-height:17px;white-space:nowrap">&lt;parent&gt;</div><div class="a" style="left:0;top:153px;width:127px;height:16px;background:#fff"></div><div class="a" style="left:0;top:169px;width:343px;height:1px;background:#dcdcdc"></div><svg class="a" style="left:1px;top:156px" width="9" height="9"><rect x="0.5" y="0.5" width="8" height="8" fill="none" stroke="#000"/><path d="M2 4.5H7M4.5 2V7" stroke="#000"/></svg><div class="a" style="left:14px;top:152px;width:113px;overflow:hidden;font-size:13px;letter-spacing:0.55px;line-height:17px;white-space:nowrap;color:#000">frame</div><div class="a" style="left:129px;top:152px;width:210px;overflow:hidden;font-size:13px;letter-spacing:0.55px;line-height:17px;white-space:nowrap">&lt;tcaptionframe&gt;</div><div class="a" style="left:0;top:170px;width:127px;height:16px;background:#fff"></div><div class="a" style="left:0;top:186px;width:343px;height:1px;background:#dcdcdc"></div><div class="a" style="left:14px;top:169px;width:113px;overflow:hidden;font-size:13px;letter-spacing:0.55px;line-height:17px;white-space:nowrap;color:#000">helpcontext</div><div class="a" style="left:129px;top:169px;width:210px;overflow:hidden;font-size:13px;letter-spacing:0.55px;line-height:17px;white-space:nowrap"></div><div class="a" style="left:0;top:187px;width:127px;height:16px;background:#fff"></div><div class="a" style="left:0;top:203px;width:343px;height:1px;background:#dcdcdc"></div><div class="a" style="left:14px;top:186px;width:113px;overflow:hidden;font-size:13px;letter-spacing:0.55px;line-height:17px;white-space:nowrap;color:#000">hint</div><div class="a" style="left:129px;top:186px;width:210px;overflow:hidden;font-size:13px;letter-spacing:0.55px;line-height:17px;white-space:nowrap"></div><div class="a" style="left:0;top:204px;width:127px;height:16px;background:#fff"></div><div class="a" style="left:0;top:220px;width:343px;height:1px;background:#dcdcdc"></div><svg class="a" style="left:1px;top:207px" width="9" height="9"><rect x="0.5" y="0.5" width="8" height="8" fill="none" stroke="#000"/><path d="M2 4.5H7M4.5 2V7" stroke="#000"/></svg><div class="a" style="left:14px;top:203px;width:113px;overflow:hidden;font-size:13px;letter-spacing:0.55px;line-height:17px;white-space:nowrap;color:#c81414">ifilink</div><div class="a" style="left:129px;top:203px;width:210px;overflow:hidden;font-size:13px;letter-spacing:0.55px;line-height:17px;white-space:nowrap">&lt;nil&gt;</div><div class="a" style="left:0;top:221px;width:127px;height:16px;background:#fff"></div><div class="a" style="left:0;top:237px;width:343px;height:1px;background:#dcdcdc"></div><div class="a" style="left:14px;top:220px;width:113px;overflow:hidden;font-size:13px;letter-spacing:0.55px;line-height:17px;white-space:nowrap;color:#000">Name</div><div class="a" style="left:129px;top:220px;width:210px;overflow:hidden;font-size:13px;letter-spacing:0.55px;line-height:17px;white-space:nowrap">C</div><div class="a" style="left:0;top:238px;width:127px;height:16px;background:#fff"></div><div class="a" style="left:0;top:254px;width:343px;height:1px;background:#dcdcdc"></div><svg class="a" style="left:1px;top:241px" width="9" height="9"><rect x="0.5" y="0.5" width="8" height="8" fill="none" stroke="#000"/><path d="M2 4.5H7M4.5 2V7" stroke="#000"/></svg><div class="a" style="left:14px;top:237px;width:113px;overflow:hidden;font-size:13px;letter-spacing:0.55px;line-height:17px;white-space:nowrap;color:#000">options</div><div class="a" style="left:129px;top:237px;width:210px;overflow:hidden;font-size:13px;letter-spacing:0.55px;line-height:17px;white-space:nowrap">[]</div><div class="a" style="left:0;top:255px;width:127px;height:16px;background:#fff"></div><div class="a" style="left:0;top:271px;width:343px;height:1px;background:#dcdcdc"></div><svg class="a" style="left:1px;top:258px" width="9" height="9"><rect x="0.5" y="0.5" width="8" height="8" fill="none" stroke="#000"/><path d="M2 4.5H7M4.5 2V7" stroke="#000"/></svg><div class="a" style="left:14px;top:254px;width:113px;overflow:hidden;font-size:13px;letter-spacing:0.55px;line-height:17px;white-space:nowrap;color:#000">optionsskin</div><div class="a" style="left:129px;top:254px;width:210px;overflow:hidden;font-size:13px;letter-spacing:0.55px;line-height:17px;white-space:nowrap">[]</div><div class="a" style="left:0;top:272px;width:127px;height:16px;background:#fff"></div><div class="a" style="left:0;top:288px;width:343px;height:1px;background:#dcdcdc"></div><svg class="a" style="left:1px;top:275px" width="9" height="9"><rect x="0.5" y="0.5" width="8" height="8" fill="none" stroke="#000"/><path d="M2 4.5H7M4.5 2V7" stroke="#000"/></svg><div class="a" style="left:14px;top:271px;width:113px;overflow:hidden;font-size:13px;letter-spacing:0.55px;line-height:17px;white-space:nowrap;color:#000">optionswidget</div><div class="a" style="left:129px;top:271px;width:210px;overflow:hidden;font-size:13px;letter-spacing:0.55px;line-height:17px;white-space:nowrap">[ow_destroywidgets]</div><div class="a" style="left:0;top:289px;width:127px;height:16px;background:#fff"></div><div class="a" style="left:0;top:305px;width:343px;height:1px;background:#dcdcdc"></div><svg class="a" style="left:1px;top:292px" width="9" height="9"><rect x="0.5" y="0.5" width="8" height="8" fill="none" stroke="#000"/><path d="M2 4.5H7M4.5 2V7" stroke="#000"/></svg><div class="a" style="left:14px;top:288px;width:113px;overflow:hidden;font-size:13px;letter-spacing:0.55px;line-height:17px;white-space:nowrap;color:#000">optionswidget1</div><div class="a" style="left:129px;top:288px;width:210px;overflow:hidden;font-size:13px;letter-spacing:0.55px;line-height:17px;white-space:nowrap">[ow1_fontglyphheight,ow1_autosc</div><div class="a" style="left:0;top:306px;width:127px;height:16px;background:#fff"></div><div class="a" style="left:0;top:322px;width:343px;height:1px;background:#dcdcdc"></div><svg class="a" style="left:1px;top:309px" width="9" height="9"><rect x="0.5" y="0.5" width="8" height="8" fill="none" stroke="#000"/><path d="M2 4.5H7M4.5 2V7" stroke="#000"/></svg><div class="a" style="left:14px;top:305px;width:113px;overflow:hidden;font-size:13px;letter-spacing:0.55px;line-height:17px;white-space:nowrap;color:#c81414">popupmenu</div><div class="a" style="left:129px;top:305px;width:210px;overflow:hidden;font-size:13px;letter-spacing:0.55px;line-height:17px;white-space:nowrap">&lt;nil&gt;</div><div class="a" style="left:0;top:323px;width:127px;height:16px;background:#fff"></div><div class="a" style="left:0;top:339px;width:343px;height:1px;background:#dcdcdc"></div><div class="a" style="left:14px;top:322px;width:113px;overflow:hidden;font-size:13px;letter-spacing:0.55px;line-height:17px;white-space:nowrap;color:#000">skingroup</div><div class="a" style="left:129px;top:322px;width:210px;overflow:hidden;font-size:13px;letter-spacing:0.55px;line-height:17px;white-space:nowrap">0</div><div class="a" style="left:0;top:340px;width:127px;height:16px;background:#fff"></div><div class="a" style="left:0;top:356px;width:343px;height:1px;background:#dcdcdc"></div><div class="a" style="left:14px;top:339px;width:113px;overflow:hidden;font-size:13px;letter-spacing:0.55px;line-height:17px;white-space:nowrap;color:#000">taborder</div><div class="a" style="left:129px;top:339px;width:210px;overflow:hidden;font-size:13px;letter-spacing:0.55px;line-height:17px;white-space:nowrap"><b>3</b></div><div class="a" style="left:0;top:357px;width:127px;height:16px;background:#fff"></div><div class="a" style="left:0;top:373px;width:343px;height:1px;background:#dcdcdc"></div><div class="a" style="left:14px;top:356px;width:113px;overflow:hidden;font-size:13px;letter-spacing:0.55px;line-height:17px;white-space:nowrap;color:#000">Tag</div><div class="a" style="left:129px;top:356px;width:210px;overflow:hidden;font-size:13px;letter-spacing:0.55px;line-height:17px;white-space:nowrap">0</div><div class="a" style="left:0;top:374px;width:127px;height:16px;background:#fff"></div><div class="a" style="left:0;top:390px;width:343px;height:1px;background:#dcdcdc"></div><div class="a" style="left:14px;top:373px;width:113px;overflow:hidden;font-size:13px;letter-spacing:0.55px;line-height:17px;white-space:nowrap;color:#000">text</div><div class="a" style="left:129px;top:373px;width:210px;overflow:hidden;font-size:13px;letter-spacing:0.55px;line-height:17px;white-space:nowrap"></div><div class="a" style="left:0;top:391px;width:127px;height:16px;background:#fff"></div><div class="a" style="left:0;top:407px;width:343px;height:1px;background:#dcdcdc"></div><svg class="a" style="left:1px;top:394px" width="9" height="9"><rect x="0.5" y="0.5" width="8" height="8" fill="none" stroke="#000"/><path d="M2 4.5H7M4.5 2V7" stroke="#000"/></svg><div class="a" style="left:14px;top:390px;width:113px;overflow:hidden;font-size:13px;letter-spacing:0.55px;line-height:17px;white-space:nowrap;color:#000">textflags</div><div class="a" style="left:129px;top:390px;width:210px;overflow:hidden;font-size:13px;letter-spacing:0.55px;line-height:17px;white-space:nowrap">[tf_right,tf_ycentered]</div><div class="a" style="left:0;top:408px;width:127px;height:16px;background:#fff"></div><div class="a" style="left:0;top:424px;width:343px;height:1px;background:#dcdcdc"></div><div class="a" style="left:14px;top:407px;width:113px;overflow:hidden;font-size:13px;letter-spacing:0.55px;line-height:17px;white-space:nowrap;color:#000">value</div><div class="a" style="left:129px;top:407px;width:210px;overflow:hidden;font-size:13px;letter-spacing:0.55px;line-height:17px;white-space:nowrap">0</div><div class="a" style="left:0;top:425px;width:127px;height:16px;background:#fff"></div><div class="a" style="left:0;top:441px;width:343px;height:1px;background:#dcdcdc"></div><div class="a" style="left:14px;top:424px;width:113px;overflow:hidden;font-size:13px;letter-spacing:0.55px;line-height:17px;white-space:nowrap;color:#000">visible</div><div class="a" style="left:129px;top:424px;width:210px;overflow:hidden;font-size:13px;letter-spacing:0.55px;line-height:17px;white-space:nowrap">True</div><div class="a" style="left:0;top:442px;width:127px;height:16px;background:#fdfdf1"></div><div class="a" style="left:0;top:458px;width:343px;height:1px;background:#dcdcdc"></div><div class="a" style="left:14px;top:441px;width:113px;overflow:hidden;font-size:13px;letter-spacing:0.55px;line-height:17px;white-space:nowrap;color:#000">onactivate</div><div class="a" style="left:129px;top:441px;width:210px;overflow:hidden;font-size:13px;letter-spacing:0.55px;line-height:17px;white-space:nowrap"></div><div class="a" style="left:0;top:459px;width:127px;height:16px;background:#fdfdf1"></div><div class="a" style="left:0;top:475px;width:343px;height:1px;background:#dcdcdc"></div><div class="a" style="left:14px;top:458px;width:113px;overflow:hidden;font-size:13px;letter-spacing:0.55px;line-height:17px;white-space:nowrap;color:#000">onafterupdateskin</div><div class="a" style="left:129px;top:458px;width:210px;overflow:hidden;font-size:13px;letter-spacing:0.55px;line-height:17px;white-space:nowrap"></div><div class="a" style="left:0;top:476px;width:127px;height:16px;background:#fdfdf1"></div><div class="a" style="left:0;top:492px;width:343px;height:1px;background:#dcdcdc"></div><div class="a" style="left:14px;top:475px;width:113px;overflow:hidden;font-size:13px;letter-spacing:0.55px;line-height:17px;white-space:nowrap;color:#000">onbeforeupdateskin</div><div class="a" style="left:129px;top:475px;width:210px;overflow:hidden;font-size:13px;letter-spacing:0.55px;line-height:17px;white-space:nowrap"></div><div class="a" style="left:0;top:493px;width:127px;height:16px;background:#fdfdf1"></div><div class="a" style="left:0;top:509px;width:343px;height:1px;background:#dcdcdc"></div><div class="a" style="left:14px;top:492px;width:113px;overflow:hidden;font-size:13px;letter-spacing:0.55px;line-height:17px;white-space:nowrap;color:#000">onchange</div><div class="a" style="left:129px;top:492px;width:210px;overflow:hidden;font-size:13px;letter-spacing:0.55px;line-height:17px;white-space:nowrap"></div><div class="a" style="left:0;top:510px;width:127px;height:16px;background:#fdfdf1"></div><div class="a" style="left:0;top:526px;width:343px;height:1px;background:#dcdcdc"></div><div class="a" style="left:14px;top:509px;width:113px;overflow:hidden;font-size:13px;letter-spacing:0.55px;line-height:17px;white-space:nowrap;color:#000">ondatachange</div><div class="a" style="left:129px;top:509px;width:210px;overflow:hidden;font-size:13px;letter-spacing:0.55px;line-height:17px;white-space:nowrap"></div><div class="a" style="left:0;top:527px;width:127px;height:16px;background:#fdfdf1"></div><div class="a" style="left:0;top:543px;width:343px;height:1px;background:#dcdcdc"></div><div class="a" style="left:14px;top:526px;width:113px;overflow:hidden;font-size:13px;letter-spacing:0.55px;line-height:17px;white-space:nowrap;color:#000">ondeactivate</div><div class="a" style="left:129px;top:526px;width:210px;overflow:hidden;font-size:13px;letter-spacing:0.55px;line-height:17px;white-space:nowrap"></div><div class="a" style="left:0;top:544px;width:127px;height:16px;background:#fdfdf1"></div><div class="a" style="left:0;top:560px;width:343px;height:1px;background:#dcdcdc"></div><div class="a" style="left:14px;top:543px;width:113px;overflow:hidden;font-size:13px;letter-spacing:0.55px;line-height:17px;white-space:nowrap;color:#000">ondefocus</div><div class="a" style="left:129px;top:543px;width:210px;overflow:hidden;font-size:13px;letter-spacing:0.55px;line-height:17px;white-space:nowrap"></div><div class="a" style="left:127px;top:0;width:1px;height:562px;background:#dcdcdc"></div><div class="a" style="left:340px;top:0;width:16px;height:561px;background:#d0d0d0;border-left:1px solid #888"></div><div class="a" style="left:341px;top:0;width:15px;height:561px;background-image:repeating-conic-gradient(#c4c4c4 0 25%,#f2f2f2 0 50%);background-size:2px 2px"></div><div class="a" style="left:341px;top:0px;width:15px;height:15px;background:linear-gradient(90deg,#e2e2e2,#cacaca);border-bottom:1px solid #888"></div><svg class="a" style="left:344px;top:5px" width="9" height="6"><path d="M0 5H9L4.5 0Z" fill="#000"/></svg><div class="a" style="left:341px;top:15px;width:15px;height:449px;background:linear-gradient(90deg,#e6e6e6,#c8c8c8);border-top:1px solid #fff;border-bottom:1px solid #888;border-right:1px solid #999"></div><div class="a" style="left:341px;top:546px;width:15px;height:15px;background:linear-gradient(90deg,#e2e2e2,#cacaca);border-top:1px solid #fff;border-bottom:1px solid #888"></div><svg class="a" style="left:344px;top:551px" width="9" height="6"><path d="M0 0H9L4.5 5Z" fill="#000"/></svg></div><div class="a" style="left:361px;top:44px;width:8px;height:561px;background:repeating-linear-gradient(90deg,#fff 0,#fff 1px,#d2d2d2 1px,#d2d2d2 2px,#858585 2px,#858585 3px,#cacaca 3px,#cacaca 4px)"></div><div class="fb" style="height:5px"></div></div>
<div class="win" style="left:0;top:155px;width:906px;height:518px;background:linear-gradient(90deg,#d8d8d8,#c6c6c6)"><div class="tb"><svg class="a" style="left:5px;top:3px" width="17" height="17" viewBox="0 0 17 17"><rect width="17" height="17" fill="#e0e0e0"/><circle cx="8.5" cy="8.5" r="7.5" fill="#1f3fd8"/><path d="M10.5 8.5L15.0 8.5" stroke="#fff" stroke-width="1.3"/><path d="M10.2 9.5L14.1 11.8" stroke="#fff" stroke-width="1.3"/><path d="M9.5 10.2L11.8 14.1" stroke="#fff" stroke-width="1.3"/><path d="M8.5 10.5L8.5 15.0" stroke="#fff" stroke-width="1.3"/><path d="M7.5 10.2L5.3 14.1" stroke="#fff" stroke-width="1.3"/><path d="M6.8 9.5L2.9 11.8" stroke="#fff" stroke-width="1.3"/><path d="M6.5 8.5L2.0 8.5" stroke="#fff" stroke-width="1.3"/><path d="M6.8 7.5L2.9 5.3" stroke="#fff" stroke-width="1.3"/><path d="M7.5 6.8L5.2 2.9" stroke="#fff" stroke-width="1.3"/><path d="M8.5 6.5L8.5 2.0" stroke="#fff" stroke-width="1.3"/><path d="M9.5 6.8L11.8 2.9" stroke="#fff" stroke-width="1.3"/><path d="M10.2 7.5L14.1 5.2" stroke="#fff" stroke-width="1.3"/><circle cx="8.5" cy="8.5" r="2" fill="#c8b040"/></svg><div class="cb" style="left:28.2px;top:2px"></div><div class="a" style="left:35px;top:9px;width:1px;height:1px;background:#888"></div><div class="tt" style="letter-spacing:0.9px">Сообщения,Исходный код (Ctrl+F1)</div><div class="cb" style="left:838px;top:2px"></div><svg class="a" style="left:838px;top:2px" width="15" height="15"><path d="M4.5 6.5L7.5 9.5L10.5 6.5" stroke="#8e8e8e" stroke-width="1.3" fill="none"/></svg><div class="cb" style="left:861px;top:2px"></div><svg class="a" style="left:861px;top:2px" width="15" height="15"><path d="M4.5 9L7.5 6L10.5 9" stroke="#8e8e8e" stroke-width="1.3" fill="none"/></svg><div class="cb" style="left:884px;top:2px"></div><svg class="a" style="left:884px;top:2px" width="15" height="15"><path d="M4.5 4.5L10.5 10.5M10.5 4.5L4.5 10.5" stroke="#8e8e8e" stroke-width="1.3" fill="none"/></svg></div><div class="a" style="left:0;top:0;width:353px;height:12px;background:linear-gradient(rgba(40,40,40,0.42),rgba(40,40,40,0.12) 5px,rgba(40,40,40,0))"></div><div class="a" style="left:2px;top:23px;width:749px;height:469px;background:#fff;border-top:1px solid #888;border-left:1px solid #888;"><div class="a" style="left:0;top:0;right:0;bottom:0;border-top:1px solid #000;border-left:1px solid #000;overflow:hidden"><div class="a" style="left:15px;top:0;width:1px;height:470px;background:#c4c4c4"></div><div class="a mono" style="left:17.4px;top:0px;font-size:16.4px;letter-spacing:0.143px;line-height:18px;white-space:pre;color:#333"> msewidgets,msedataedits,mseedit,mseificomp,mseificompglob,mseifiglob,
 msestrings,msetypes,msedispwidgets,mserichstring;

<b style="color:#000">type</b>
 tmainfo = <b style="color:#000">class</b>(tmainform)
   tbutton_exit: tbutton;
   A: tintegeredit;
   B: tintegeredit;
   C: tintegerdisp;
   <b style="color:#000">procedure</b> onexit(<b style="color:#000">const</b> sender: TObject);
   <b style="color:#000">procedure</b> summa(<b style="color:#000">const</b> sender: TObject);
 <b style="color:#000">end</b>;
<b style="color:#000">var</b>
 mainfo: tmainfo;
<b style="color:#000">implementation</b>
<b style="color:#000">uses</b>
 main_mfm;
<b style="color:#000">procedure</b> tmainfo.onexit(<b style="color:#000">const</b> sender: TObject);
<b style="color:#000">begin</b>
  Close;
<b style="color:#000">end</b>;

<b style="color:#000">procedure</b> tmainfo.summa(<b style="color:#000">const</b> sender: TObject);
<b style="color:#000">begin</b>
  C.value:= A.value + B.value;
<b style="color:#000">end</b>;</div></div></div><div class="a" style="left:735px;top:25px;width:15px;height:452px;background-image:repeating-conic-gradient(#c6c6c6 0 25%,#f4f4f4 0 50%);background-size:2px 2px"></div><div class="a" style="left:735px;top:25px;width:14px;height:15px;background:linear-gradient(90deg,#e4e4e4,#cacaca);border-top:1px solid #fff;border-left:1px solid #fff;border-right:1px solid #8a8a8a;border-bottom:1px solid #8a8a8a"></div><svg class="a" style="left:738px;top:29px" width="9" height="6"><path d="M0 5H9L4.5 0Z" fill="#000"/></svg><div class="a" style="left:735px;top:112px;width:14px;height:302px;background:linear-gradient(90deg,#e2e2e2,#c6c6c6);border-top:1px solid #fff;border-left:1px solid #fff;border-right:1px solid #8a8a8a;border-bottom:1px solid #8a8a8a"></div><div class="a" style="left:735px;top:462px;width:14px;height:15px;background:linear-gradient(90deg,#e4e4e4,#cacaca);border-top:1px solid #fff;border-left:1px solid #fff;border-right:1px solid #8a8a8a;border-bottom:1px solid #8a8a8a"></div><svg class="a" style="left:738px;top:467px" width="9" height="6"><path d="M0 0H9L4.5 5Z" fill="#000"/></svg><div class="a" style="left:5px;top:477px;width:730px;height:15px;background-image:repeating-conic-gradient(#c6c6c6 0 25%,#f4f4f4 0 50%);background-size:2px 2px"></div><div class="a" style="left:5px;top:477px;width:14px;height:15px;background:linear-gradient(90deg,#e4e4e4,#cacaca);border-top:1px solid #fff;border-left:1px solid #fff;border-right:1px solid #8a8a8a;border-bottom:1px solid #8a8a8a"></div><svg class="a" style="left:9px;top:480px" width="6" height="9"><path d="M5 0V9L0 4.5Z" fill="#000"/></svg><div class="a" style="left:19px;top:477px;width:252px;height:15px;background:linear-gradient(#e4e4e4,#c8c8c8);border-top:1px solid #fff;border-left:1px solid #fff;border-right:1px solid #8a8a8a;border-bottom:1px solid #8a8a8a"></div><div class="a" style="left:720px;top:477px;width:15px;height:15px;background:linear-gradient(90deg,#e4e4e4,#cacaca);border-top:1px solid #fff;border-left:1px solid #fff;border-right:1px solid #8a8a8a;border-bottom:1px solid #8a8a8a"></div><svg class="a" style="left:725px;top:480px" width="6" height="9"><path d="M0 0V9L5 4.5Z" fill="#000"/></svg><div class="a" style="left:735px;top:477px;width:15px;height:15px;background:#cdcdcd"></div><div class="a" style="left:2px;top:494px;width:68px;height:19px;background:linear-gradient(90deg,#d6d6d6,#cdcdcd);border-top:1px solid #888;border-left:1px solid #888;border-bottom:1px solid #fff;border-right:1px solid #fff"></div><div class="a" style="left:22px;top:496px;font-size:13px;letter-spacing:0.3px;line-height:15px">31:3</div><div class="a" style="left:70px;top:494px;width:681px;height:19px;background:linear-gradient(90deg,#d6d6d6,#c8c8c8);border-top:1px solid #888;border-left:1px solid #888;border-bottom:1px solid #fff;border-right:1px solid #fff"></div><div class="a" style="left:72px;top:496px;font-size:13px;letter-spacing:0.6px;line-height:15px;white-space:nowrap">/home/user/Документы2/main.pas</div><div class="a" style="left:751px;top:23px;width:134px;height:490px;background:linear-gradient(90deg,#d8d8d8,#c4c4c4)"></div><div class="a" style="left:750px;top:24px;width:1px;height:489px;background:#8a8a8a"></div><div class="a" style="left:752px;top:23px;width:12px;height:13px;background:linear-gradient(90deg,#e4e4e4,#cacaca);border-top:1px solid #fff;border-left:1px solid #fff;border-right:1px solid #8a8a8a;border-bottom:1px solid #8a8a8a"></div><div class="a" style="left:752px;top:36px;width:12px;height:13px;background:linear-gradient(90deg,#e4e4e4,#cacaca);border-top:1px solid #fff;border-left:1px solid #fff;border-right:1px solid #8a8a8a;border-bottom:1px solid #8a8a8a"></div><div class="a" style="left:765px;top:23px;width:12px;height:13px;background:linear-gradient(90deg,#e4e4e4,#cacaca);border-top:1px solid #fff;border-left:1px solid #fff;border-right:1px solid #8a8a8a;border-bottom:1px solid #8a8a8a"></div><div class="a" style="left:765px;top:36px;width:12px;height:13px;background:linear-gradient(90deg,#e4e4e4,#cacaca);border-top:1px solid #fff;border-left:1px solid #fff;border-right:1px solid #8a8a8a;border-bottom:1px solid #8a8a8a"></div><div class="a" style="left:778px;top:23px;width:12px;height:13px;background:linear-gradient(90deg,#e4e4e4,#cacaca);border-top:1px solid #fff;border-left:1px solid #fff;border-right:1px solid #8a8a8a;border-bottom:1px solid #8a8a8a"></div><div class="a" style="left:778px;top:36px;width:12px;height:13px;background:linear-gradient(90deg,#e4e4e4,#cacaca);border-top:1px solid #fff;border-left:1px solid #fff;border-right:1px solid #8a8a8a;border-bottom:1px solid #8a8a8a"></div><svg class="a" style="left:752px;top:23px" width="38" height="26"><path d="M8 3V10L4.5 6.5Z" fill="#8a8a8a"/><path d="M17 3V10L20.5 6.5Z" fill="#8a8a8a"/><path d="M29 3V10L32 6.5Z M28 3V10" fill="#8a8a8a" stroke="#8a8a8a" stroke-width="0.8"/><path d="M3 21H10L6.5 17Z" fill="#8a8a8a"/><path d="M16 17H23L19.5 21Z" fill="#8a8a8a"/><path d="M29 16V23L32.5 19.5Z" fill="#000" stroke="#000"/><path d="M34 16V23" stroke="#000" stroke-width="1.5"/></svg><div class="a" style="left:845px;top:23px;width:20px;height:20px;background:linear-gradient(90deg,#e4e4e4,#cacaca);border-top:1px solid #fff;border-left:1px solid #fff;border-right:1px solid #8a8a8a;border-bottom:1px solid #8a8a8a"></div><div class="a" style="left:866px;top:23px;width:19px;height:20px;background:linear-gradient(90deg,#e4e4e4,#cacaca);border-top:1px solid #fff;border-left:1px solid #fff;border-right:1px solid #8a8a8a;border-bottom:1px solid #8a8a8a"></div><svg class="a" style="left:845px;top:23px" width="40" height="20"><path d="M13 4V16L6 10Z" fill="#8a8a8a"/><path d="M13 4V16" stroke="#fff"/><path d="M28 4V16L35 10Z" fill="#8a8a8a"/><path d="M35 10L28 16" stroke="#fff"/></svg><svg class="a" style="left:886px;top:23px" width="9" height="21"><rect x="0" y="0" width="9" height="21" fill="#d8d8d8"/><path d="M1.5 1.5L7.5 7.5M7.5 1.5L1.5 7.5" stroke="#000" stroke-width="1.1"/><rect x="1.5" y="11.5" width="6" height="6" fill="none" stroke="#000" stroke-width="1.2"/><path d="M0 9.5H9" stroke="#fff"/></svg><svg class="a" style="left:896px;top:23px" width="9" height="30"><rect x="0" y="0" width="9" height="30" fill="#d8d8d8"/><path d="M4.5 1V18M1 4L4.5 1L8 4M1 15L4.5 18L8 15" stroke="#000" stroke-width="1.1" fill="none"/><path d="M0 9.5H9M0 20.5H9" stroke="#fff"/><path d="M4.5 21.5L7 24.5L4.5 27.5L2 24.5Z" stroke="#000" fill="none"/></svg><div class="a" style="left:886px;top:45px;width:8px;height:467px;background:repeating-linear-gradient(90deg,#fff 0,#fff 1px,#d2d2d2 1px,#d2d2d2 2px,#858585 2px,#858585 3px,#cacaca 3px,#cacaca 4px)"></div><div class="a" style="left:896px;top:55px;width:8px;height:457px;background:repeating-linear-gradient(90deg,#fff 0,#fff 1px,#d2d2d2 1px,#d2d2d2 2px,#858585 2px,#858585 3px,#cacaca 3px,#cacaca 4px)"></div><div class="a" style="left:751px;top:49px;width:134px;height:18px;background:linear-gradient(#e2e2e2,#c8c8c8);border-top:1px solid #fff;border-left:1px solid #8a8a8a;border-right:1px solid #8a8a8a;border-bottom:1px solid #8a8a8a"></div><div class="a" style="left:753px;top:50px;font-size:13px;letter-spacing:0.4px;line-height:15px">summa.pas</div><div class="a" style="left:751px;top:67px;width:133px;height:18px;background:#e0e0e0;border-top:1px solid #fff;border-left:1px solid #fff;border-right:1px solid #8a8a8a;border-bottom:1px solid #8a8a8a"></div><div class="a" style="left:752px;top:68px;font-size:13px;letter-spacing:0.4px;line-height:15px">main.pas</div><div class="a" style="right:0;top:22px;width:1.5px;bottom:0;background:#ebe8e5"></div><div class="a" style="left:0;top:22px;width:2px;bottom:0;background:#ebe8e5"></div><div class="fb" style="height:5px"></div></div>
<div class="win" style="left:0;top:673px;width:906px;height:309px;background:linear-gradient(90deg,#d8d8d8,#c6c6c6)"><div class="tb"><div class="a" style="left:5px;top:3px;width:17px;height:16px;background:#e8e8e8;border:1px solid #ccc;font-size:10px;font-weight:bold;line-height:13px;letter-spacing:-0.5px;text-align:center">~&gt;</div><div class="cb" style="left:28.2px;top:2px"></div><div class="a" style="left:35px;top:9px;width:1px;height:1px;background:#888"></div><div class="tt" style="letter-spacing:0.93px">Консоль вывода из собранной программы</div><div class="cb" style="left:838px;top:2px"></div><svg class="a" style="left:838px;top:2px" width="15" height="15"><path d="M4.5 6.5L7.5 9.5L10.5 6.5" stroke="#8e8e8e" stroke-width="1.3" fill="none"/></svg><div class="cb" style="left:861px;top:2px"></div><svg class="a" style="left:861px;top:2px" width="15" height="15"><path d="M4.5 9L7.5 6L10.5 9" stroke="#8e8e8e" stroke-width="1.3" fill="none"/></svg><div class="cb" style="left:884px;top:2px"></div><svg class="a" style="left:884px;top:2px" width="15" height="15"><path d="M4.5 4.5L10.5 10.5M10.5 4.5L4.5 10.5" stroke="#8e8e8e" stroke-width="1.3" fill="none"/></svg></div><div class="a" style="left:2px;top:23px;width:892px;height:281px;background:#fff;border-top:1px solid #888;border-left:1px solid #888"><div class="a" style="left:0;top:0;right:0;bottom:0;border-top:1px solid #000;border-left:1px solid #000;background:linear-gradient(90deg,#fff 90%,#f4f4f4)"></div></div><div class="a" style="left:5px;top:289px;width:888px;height:15px;background-image:repeating-conic-gradient(#c6c6c6 0 25%,#f4f4f4 0 50%);background-size:2px 2px"></div><div class="a" style="left:5px;top:289px;width:14px;height:15px;background:linear-gradient(90deg,#e4e4e4,#cacaca);border-top:1px solid #fff;border-left:1px solid #fff;border-right:1px solid #8a8a8a;border-bottom:1px solid #8a8a8a"></div><svg class="a" style="left:9px;top:292px" width="6" height="9"><path d="M5 0V9L0 4.5Z" fill="#000"/></svg><div class="a" style="left:19px;top:289px;width:252px;height:15px;background:linear-gradient(#e4e4e4,#c8c8c8);border-top:1px solid #fff;border-left:1px solid #fff;border-right:1px solid #8a8a8a;border-bottom:1px solid #8a8a8a"></div><div class="a" style="left:879px;top:289px;width:14px;height:15px;background:linear-gradient(90deg,#e4e4e4,#cacaca);border-top:1px solid #fff;border-left:1px solid #fff;border-right:1px solid #8a8a8a;border-bottom:1px solid #8a8a8a"></div><svg class="a" style="left:884px;top:292px" width="6" height="9"><path d="M0 0V9L5 4.5Z" fill="#000"/></svg><svg class="a" style="left:896px;top:23px" width="9" height="11"><rect width="9" height="11" fill="#d4d4d4"/><path d="M4.5 10V1M1 4L4.5 1L8 4" stroke="#000" stroke-width="1.1" fill="none"/></svg><div class="a" style="left:896px;top:34px;width:8px;height:270px;background:repeating-linear-gradient(90deg,#fff 0,#fff 1px,#d2d2d2 1px,#d2d2d2 2px,#858585 2px,#858585 3px,#cacaca 3px,#cacaca 4px)"></div><div class="a" style="left:0;top:22px;width:2px;bottom:0;background:#ebe8e5"></div><div class="a" style="right:0;top:22px;width:1.5px;bottom:0;background:#ebe8e5"></div><div class="fb" style="height:5px"></div></div>
<div class="win" style="left:907px;top:612px;width:373px;height:227px;background:linear-gradient(90deg,#d8d8d8,#c6c6c6)"><div class="tb"><div class="a" style="left:5px;top:3px;width:18px;height:15px;background:#e8e8e8;border:1px solid #ccc;font-size:10px;line-height:13px;letter-spacing:-0.5px;text-align:center;color:#333">010</div><div class="cb" style="left:28.2px;top:2px"></div><div class="a" style="left:35px;top:9px;width:1px;height:1px;background:#888"></div><div class="tt" style="letter-spacing:0.4px">CPU I386</div><div class="cb" style="left:305px;top:2px"></div><svg class="a" style="left:305px;top:2px" width="15" height="15"><path d="M4.5 6.5L7.5 9.5L10.5 6.5" stroke="#8e8e8e" stroke-width="1.3" fill="none"/></svg><div class="cb" style="left:328px;top:2px"></div><svg class="a" style="left:328px;top:2px" width="15" height="15"><path d="M4.5 9L7.5 6L10.5 9" stroke="#8e8e8e" stroke-width="1.3" fill="none"/></svg><div class="cb" style="left:351px;top:2px"></div><svg class="a" style="left:351px;top:2px" width="15" height="15"><path d="M4.5 4.5L10.5 10.5M10.5 4.5L4.5 10.5" stroke="#8e8e8e" stroke-width="1.3" fill="none"/></svg></div><div class="a" style="left:2px;top:23px;width:124px;height:19px;background:linear-gradient(90deg,#dcdcdc,#d4d4d4);border-top:1px solid #8a8a8a;border-left:1px solid #8a8a8a;border-bottom:1px solid #fff;border-right:1px solid #fff"></div><div class="a" style="left:170px;top:27px;width:12px;height:12px;background:#fff;border:1px solid #888;border-right-color:#fff;border-bottom-color:#fff"></div><svg class="a" style="left:170px;top:27px" width="12" height="12"><path d="M3 3L9 9M9 3L3 9" stroke="#000" stroke-width="2"/></svg><div class="a" style="left:184px;top:25px;font-size:13px;letter-spacing:0.5px;line-height:15px;white-space:nowrap;">CPU вкл</div><div class="a" style="left:6.2999999999999545px;top:47px;font-size:12px;letter-spacing:0px;line-height:15px;white-space:nowrap;">V</div><div class="a" style="left:23.5px;top:47px;font-size:12px;letter-spacing:0px;line-height:15px;white-space:nowrap;">R</div><div class="a" style="left:37.799999999999955px;top:47px;font-size:12px;letter-spacing:0px;line-height:15px;white-space:nowrap;">N</div><div class="a" style="left:45.700000000000045px;top:47px;font-size:12px;letter-spacing:0px;line-height:15px;white-space:nowrap;">T</div><div class="a" style="left:57.60000000000002px;top:47px;font-size:12px;letter-spacing:0px;line-height:15px;white-space:nowrap;">I</div><div class="a" style="left:61px;top:47px;font-size:12px;letter-spacing:0px;line-height:15px;white-space:nowrap;">O</div><div class="a" style="left:73.89999999999998px;top:47px;font-size:12px;letter-spacing:0px;line-height:15px;white-space:nowrap;">O</div><div class="a" style="left:84.5px;top:47px;font-size:12px;letter-spacing:0px;line-height:15px;white-space:nowrap;">D</div><div class="a" style="left:98.60000000000002px;top:47px;font-size:12px;letter-spacing:0px;line-height:15px;white-space:nowrap;">I</div><div class="a" style="left:107.79999999999995px;top:47px;font-size:12px;letter-spacing:0px;line-height:15px;white-space:nowrap;">T</div><div class="a" style="left:117.59999999999991px;top:47px;font-size:12px;letter-spacing:0px;line-height:15px;white-space:nowrap;">S</div><div class="a" style="left:129px;top:47px;font-size:12px;letter-spacing:0px;line-height:15px;white-space:nowrap;">Z</div><div class="a" style="left:138.5px;top:47px;font-size:12px;letter-spacing:0px;line-height:15px;white-space:nowrap;">A</div><div class="a" style="left:151.5999999999999px;top:47px;font-size:12px;letter-spacing:0px;line-height:15px;white-space:nowrap;">P</div><div class="a" style="left:162.5px;top:47px;font-size:12px;letter-spacing:0px;line-height:15px;white-space:nowrap;">C</div><div class="a" style="left:6px;top:63px;width:11px;height:11px;background:#d4d4d4;border-top:1px solid #8a8a8a;border-left:1px solid #8a8a8a;border-bottom:1px solid #fff;border-right:1px solid #fff"></div><div class="a" style="left:22px;top:63px;width:11px;height:11px;background:#d4d4d4;border-top:1px solid #8a8a8a;border-left:1px solid #8a8a8a;border-bottom:1px solid #fff;border-right:1px solid #fff"></div><div class="a" style="left:39px;top:63px;width:11px;height:11px;background:#d4d4d4;border-top:1px solid #8a8a8a;border-left:1px solid #8a8a8a;border-bottom:1px solid #fff;border-right:1px solid #fff"></div><div class="a" style="left:57px;top:63px;width:11px;height:11px;background:#d4d4d4;border-top:1px solid #8a8a8a;border-left:1px solid #8a8a8a;border-bottom:1px solid #fff;border-right:1px solid #fff"></div><div class="a" style="left:72px;top:63px;width:11px;height:11px;background:#d4d4d4;border-top:1px solid #8a8a8a;border-left:1px solid #8a8a8a;border-bottom:1px solid #fff;border-right:1px solid #fff"></div><div class="a" style="left:83px;top:63px;width:11px;height:11px;background:#d4d4d4;border-top:1px solid #8a8a8a;border-left:1px solid #8a8a8a;border-bottom:1px solid #fff;border-right:1px solid #fff"></div><div class="a" style="left:94px;top:63px;width:11px;height:11px;background:#d4d4d4;border-top:1px solid #8a8a8a;border-left:1px solid #8a8a8a;border-bottom:1px solid #fff;border-right:1px solid #fff"></div><div class="a" style="left:105px;top:63px;width:11px;height:11px;background:#d4d4d4;border-top:1px solid #8a8a8a;border-left:1px solid #8a8a8a;border-bottom:1px solid #fff;border-right:1px solid #fff"></div><div class="a" style="left:116px;top:63px;width:11px;height:11px;background:#d4d4d4;border-top:1px solid #8a8a8a;border-left:1px solid #8a8a8a;border-bottom:1px solid #fff;border-right:1px solid #fff"></div><div class="a" style="left:127px;top:63px;width:11px;height:11px;background:#d4d4d4;border-top:1px solid #8a8a8a;border-left:1px solid #8a8a8a;border-bottom:1px solid #fff;border-right:1px solid #fff"></div><div class="a" style="left:138px;top:63px;width:11px;height:11px;background:#d4d4d4;border-top:1px solid #8a8a8a;border-left:1px solid #8a8a8a;border-bottom:1px solid #fff;border-right:1px solid #fff"></div><div class="a" style="left:149px;top:63px;width:11px;height:11px;background:#d4d4d4;border-top:1px solid #8a8a8a;border-left:1px solid #8a8a8a;border-bottom:1px solid #fff;border-right:1px solid #fff"></div><div class="a" style="left:160px;top:63px;width:11px;height:11px;background:#d4d4d4;border-top:1px solid #8a8a8a;border-left:1px solid #8a8a8a;border-bottom:1px solid #fff;border-right:1px solid #fff"></div><div class="a" style="left:2px;top:77px;width:93px;height:20px;background:linear-gradient(90deg,#e0e0e0,#d8d8d8);border-top:1px solid #8a8a8a;border-left:1px solid #8a8a8a;border-bottom:1px solid #fff;border-right:1px solid #fff"></div><div class="a" style="left:2px;top:80px;font-size:13px;letter-spacing:0.7px;line-height:15px;white-space:nowrap;width:91px;text-align:right">00000000</div><div class="a" style="left:97px;top:79px;font-size:13px;letter-spacing:0.6px;line-height:15px;white-space:nowrap;">eax</div><div class="a" style="left:2px;top:97px;width:93px;height:20px;background:linear-gradient(90deg,#e0e0e0,#d8d8d8);border-top:1px solid #8a8a8a;border-left:1px solid #8a8a8a;border-bottom:1px solid #fff;border-right:1px solid #fff"></div><div class="a" style="left:2px;top:100px;font-size:13px;letter-spacing:0.7px;line-height:15px;white-space:nowrap;width:91px;text-align:right">00000000</div><div class="a" style="left:97px;top:99px;font-size:13px;letter-spacing:0.6px;line-height:15px;white-space:nowrap;">ebx</div><div class="a" style="left:2px;top:117px;width:93px;height:20px;background:linear-gradient(90deg,#e0e0e0,#d8d8d8);border-top:1px solid #8a8a8a;border-left:1px solid #8a8a8a;border-bottom:1px solid #fff;border-right:1px solid #fff"></div><div class="a" style="left:2px;top:120px;font-size:13px;letter-spacing:0.7px;line-height:15px;white-space:nowrap;width:91px;text-align:right">00000000</div><div class="a" style="left:97px;top:119px;font-size:13px;letter-spacing:0.6px;line-height:15px;white-space:nowrap;">ecx</div><div class="a" style="left:2px;top:137px;width:93px;height:20px;background:linear-gradient(90deg,#e0e0e0,#d8d8d8);border-top:1px solid #8a8a8a;border-left:1px solid #8a8a8a;border-bottom:1px solid #fff;border-right:1px solid #fff"></div><div class="a" style="left:2px;top:140px;font-size:13px;letter-spacing:0.7px;line-height:15px;white-space:nowrap;width:91px;text-align:right">00000000</div><div class="a" style="left:97px;top:139px;font-size:13px;letter-spacing:0.6px;line-height:15px;white-space:nowrap;">edx</div><div class="a" style="left:2px;top:157px;width:93px;height:20px;background:linear-gradient(90deg,#e0e0e0,#d8d8d8);border-top:1px solid #8a8a8a;border-left:1px solid #8a8a8a;border-bottom:1px solid #fff;border-right:1px solid #fff"></div><div class="a" style="left:2px;top:160px;font-size:13px;letter-spacing:0.7px;line-height:15px;white-space:nowrap;width:91px;text-align:right">00000000</div><div class="a" style="left:97px;top:159px;font-size:13px;letter-spacing:0.6px;line-height:15px;white-space:nowrap;">esi</div><div class="a" style="left:2px;top:177px;width:93px;height:20px;background:linear-gradient(90deg,#e0e0e0,#d8d8d8);border-top:1px solid #8a8a8a;border-left:1px solid #8a8a8a;border-bottom:1px solid #fff;border-right:1px solid #fff"></div><div class="a" style="left:2px;top:180px;font-size:13px;letter-spacing:0.7px;line-height:15px;white-space:nowrap;width:91px;text-align:right">00000000</div><div class="a" style="left:97px;top:179px;font-size:13px;letter-spacing:0.6px;line-height:15px;white-space:nowrap;">edi</div><div class="a" style="left:2px;top:197px;width:93px;height:20px;background:linear-gradient(90deg,#e0e0e0,#d8d8d8);border-top:1px solid #8a8a8a;border-left:1px solid #8a8a8a;border-bottom:1px solid #fff;border-right:1px solid #fff"></div><div class="a" style="left:2px;top:200px;font-size:13px;letter-spacing:0.7px;line-height:15px;white-space:nowrap;width:91px;text-align:right">00000000</div><div class="a" style="left:97px;top:199px;font-size:13px;letter-spacing:0.6px;line-height:15px;white-space:nowrap;">ebp</div><div class="a" style="left:130px;top:77px;width:100px;height:20px;background:linear-gradient(90deg,#e0e0e0,#d8d8d8);border-top:1px solid #8a8a8a;border-left:1px solid #8a8a8a;border-bottom:1px solid #fff;border-right:1px solid #fff"></div><div class="a" style="left:130px;top:80px;font-size:13px;letter-spacing:0.7px;line-height:15px;white-space:nowrap;width:99px;text-align:right">00000000</div><div class="a" style="left:232px;top:79px;font-size:13px;letter-spacing:0.6px;line-height:15px;white-space:nowrap;">efl</div><div class="a" style="left:130px;top:97px;width:100px;height:20px;background:linear-gradient(90deg,#e0e0e0,#d8d8d8);border-top:1px solid #8a8a8a;border-left:1px solid #8a8a8a;border-bottom:1px solid #fff;border-right:1px solid #fff"></div><div class="a" style="left:130px;top:100px;font-size:13px;letter-spacing:0.7px;line-height:15px;white-space:nowrap;width:99px;text-align:right">00000000</div><div class="a" style="left:232px;top:99px;font-size:13px;letter-spacing:0.6px;line-height:15px;white-space:nowrap;">esp</div><div class="a" style="left:130px;top:117px;width:100px;height:20px;background:linear-gradient(90deg,#e0e0e0,#d8d8d8);border-top:1px solid #8a8a8a;border-left:1px solid #8a8a8a;border-bottom:1px solid #fff;border-right:1px solid #fff"></div><div class="a" style="left:130px;top:120px;font-size:13px;letter-spacing:0.7px;line-height:15px;white-space:nowrap;width:99px;text-align:right">00000000</div><div class="a" style="left:232px;top:119px;font-size:13px;letter-spacing:0.6px;line-height:15px;white-space:nowrap;">eip</div><div class="a" style="left:130px;top:157px;width:41px;height:20px;background:linear-gradient(90deg,#e0e0e0,#d8d8d8);border-top:1px solid #8a8a8a;border-left:1px solid #8a8a8a;border-bottom:1px solid #fff;border-right:1px solid #fff"></div><div class="a" style="left:130px;top:160px;font-size:13px;letter-spacing:0.7px;line-height:15px;white-space:nowrap;width:40px;text-align:right">0000</div><div class="a" style="left:173px;top:159px;font-size:13px;letter-spacing:0.6px;line-height:15px;white-space:nowrap;">cs</div><div class="a" style="left:189px;top:157px;width:41px;height:20px;background:linear-gradient(90deg,#e0e0e0,#d8d8d8);border-top:1px solid #8a8a8a;border-left:1px solid #8a8a8a;border-bottom:1px solid #fff;border-right:1px solid #fff"></div><div class="a" style="left:189px;top:160px;font-size:13px;letter-spacing:0.7px;line-height:15px;white-space:nowrap;width:40px;text-align:right">0000</div><div class="a" style="left:232px;top:159px;font-size:13px;letter-spacing:0.6px;line-height:15px;white-space:nowrap;">fs</div><div class="a" style="left:130px;top:177px;width:41px;height:20px;background:linear-gradient(90deg,#e0e0e0,#d8d8d8);border-top:1px solid #8a8a8a;border-left:1px solid #8a8a8a;border-bottom:1px solid #fff;border-right:1px solid #fff"></div><div class="a" style="left:130px;top:180px;font-size:13px;letter-spacing:0.7px;line-height:15px;white-space:nowrap;width:40px;text-align:right">0000</div><div class="a" style="left:173px;top:179px;font-size:13px;letter-spacing:0.6px;line-height:15px;white-space:nowrap;">ds</div><div class="a" style="left:189px;top:177px;width:41px;height:20px;background:linear-gradient(90deg,#e0e0e0,#d8d8d8);border-top:1px solid #8a8a8a;border-left:1px solid #8a8a8a;border-bottom:1px solid #fff;border-right:1px solid #fff"></div><div class="a" style="left:189px;top:180px;font-size:13px;letter-spacing:0.7px;line-height:15px;white-space:nowrap;width:40px;text-align:right">0000</div><div class="a" style="left:232px;top:179px;font-size:13px;letter-spacing:0.6px;line-height:15px;white-space:nowrap;">gs</div><div class="a" style="left:130px;top:197px;width:41px;height:20px;background:linear-gradient(90deg,#e0e0e0,#d8d8d8);border-top:1px solid #8a8a8a;border-left:1px solid #8a8a8a;border-bottom:1px solid #fff;border-right:1px solid #fff"></div><div class="a" style="left:130px;top:200px;font-size:13px;letter-spacing:0.7px;line-height:15px;white-space:nowrap;width:40px;text-align:right">0000</div><div class="a" style="left:173px;top:199px;font-size:13px;letter-spacing:0.6px;line-height:15px;white-space:nowrap;">es</div><div class="a" style="left:189px;top:197px;width:41px;height:20px;background:linear-gradient(90deg,#e0e0e0,#d8d8d8);border-top:1px solid #8a8a8a;border-left:1px solid #8a8a8a;border-bottom:1px solid #fff;border-right:1px solid #fff"></div><div class="a" style="left:189px;top:200px;font-size:13px;letter-spacing:0.7px;line-height:15px;white-space:nowrap;width:40px;text-align:right">0000</div><div class="a" style="left:232px;top:199px;font-size:13px;letter-spacing:0.6px;line-height:15px;white-space:nowrap;">ss</div><svg class="a" style="left:361px;top:22px" width="9" height="20"><rect width="9" height="20" fill="#d4d4d4"/><path d="M4.5 0.5V19.5M1 3.5L4.5 0.5L8 3.5M1 16.5L4.5 19.5L8 16.5" stroke="#000" stroke-width="1.1" fill="none"/><path d="M0 10H9" stroke="#fff"/></svg><div class="a" style="left:361px;top:44px;width:8px;height:174px;background:repeating-linear-gradient(90deg,#fff 0,#fff 1px,#d2d2d2 1px,#d2d2d2 2px,#858585 2px,#858585 3px,#cacaca 3px,#cacaca 4px)"></div><div class="a" style="left:0;top:22px;width:2px;bottom:0;background:#e6e3e0"></div><div class="a" style="right:0;top:22px;width:2px;bottom:0;background:#e0dddb"></div><div class="fb" style="height:10px"></div></div>
<div class="win" style="left:907px;top:840px;width:373px;height:144px;background:linear-gradient(90deg,#d8d8d8,#c6c6c6)"><div class="tb"><div class="a" style="left:5px;top:3px;width:18px;height:15px;background:#e8e8e8;border:1px solid #ccc;font-size:10px;line-height:13px;letter-spacing:-0.5px;text-align:center;color:#333">???</div><div class="cb" style="left:28.2px;top:2px"></div><div class="a" style="left:35px;top:9px;width:1px;height:1px;background:#888"></div><div class="tt" style="letter-spacing:0.8px">Наблюдения</div><div class="cb" style="left:305px;top:2px"></div><svg class="a" style="left:305px;top:2px" width="15" height="15"><path d="M4.5 6.5L7.5 9.5L10.5 6.5" stroke="#8e8e8e" stroke-width="1.3" fill="none"/></svg><div class="cb" style="left:328px;top:2px"></div><svg class="a" style="left:328px;top:2px" width="15" height="15"><path d="M4.5 9L7.5 6L10.5 9" stroke="#8e8e8e" stroke-width="1.3" fill="none"/></svg><div class="cb" style="left:351px;top:2px"></div><svg class="a" style="left:351px;top:2px" width="15" height="15"><path d="M4.5 4.5L10.5 10.5M10.5 4.5L4.5 10.5" stroke="#8e8e8e" stroke-width="1.3" fill="none"/></svg></div><div class="a" style="left:11px;top:27px;width:12px;height:12px;background:#fff;border:1px solid #888;border-right-color:#fff;border-bottom-color:#fff"></div><svg class="a" style="left:11px;top:27px" width="12" height="12"><path d="M3 3L9 9M9 3L3 9" stroke="#000" stroke-width="2"/></svg><div class="a" style="left:25px;top:26px;font-size:13px;letter-spacing:0.58px;line-height:15px;white-space:nowrap;">Включить наблюдения</div><div class="a" style="left:1px;top:45px;width:359px;height:94px;background:#fff;border-top:1px solid #999;border-left:2px solid #777;border-right:1px solid #fff;border-bottom:1px solid #fff"></div><div class="a" style="left:3px;top:46px;width:356px;height:92px;background:#fff;border-top:1.5px solid #000;border-left:1.5px solid #000"></div><div class="a" style="left:4px;top:47px;width:355px;height:17px;background:linear-gradient(#e6e6e6,#cfcfcf);border-bottom:1.5px solid #000;border-right:1.5px solid #000"></div><div class="a" style="left:22px;top:47px;width:1.5px;height:17px;background:#000"></div><div class="a" style="left:36px;top:47px;width:1.5px;height:17px;background:#000"></div><div class="a" style="left:189px;top:47px;width:1.5px;height:17px;background:#000"></div><div class="a" style="left:345px;top:47px;width:1.5px;height:17px;background:#000"></div><div class="a" style="left:24px;top:48px;font-size:13px;letter-spacing:0.3px;line-height:15px;white-space:nowrap;width:12px;text-align:center">A</div><div class="a" style="left:38px;top:48px;font-size:13px;letter-spacing:0.55px;line-height:15px;white-space:nowrap;width:151px;text-align:center">Выражение</div><div class="a" style="left:191px;top:48px;font-size:13px;letter-spacing:0.55px;line-height:15px;white-space:nowrap;width:154px;text-align:center">Результат</div><div class="a" style="left:347px;top:48px;font-size:13px;letter-spacing:0.3px;line-height:15px;white-space:nowrap;width:11px;text-align:center">F</div><svg class="a" style="left:362px;top:22px" width="9" height="11"><rect x="0.5" y="0.5" width="8" height="10" fill="#d8d8d8" stroke="#fff"/><path d="M4.5 10V2M1 5L4.5 2L8 5" stroke="#000" stroke-width="1.1" fill="none"/></svg><div class="a" style="left:362px;top:34px;width:8px;height:104px;background:repeating-linear-gradient(90deg,#fff 0,#fff 1px,#d2d2d2 1px,#d2d2d2 2px,#858585 2px,#858585 3px,#cacaca 3px,#cacaca 4px)"></div><div class="a" style="left:0;top:22px;width:2px;bottom:0;background:#e6e3e0"></div><div class="a" style="right:0;top:22px;width:2px;bottom:0;background:#e0dddb"></div><div class="fb" style="height:5px"></div></div>
<div class="a" style="left:479px;top:286px;width:417px;height:148px;border-radius:5px 5px 2px 2px;box-shadow:0 1px 14px 4px rgba(90,185,255,0.8);background:#d8d4d0"></div><div class="win" style="left:479px;top:286px;width:417px;height:148px;background:#d8d4d0;border-radius:5px 5px 2px 2px"><div class="tb"><div class="a" style="left:6px;top:3px;width:16px;height:15px;background:linear-gradient(90deg,#e8e8e8,#c0c0c0);border:1px solid #999"><div style="height:3px;background:linear-gradient(90deg,#3050d0 70%,#aaa 70%)"></div></div><div class="cb" style="left:28.2px;top:2px"></div><div class="a" style="left:35px;top:9px;width:1px;height:1px;background:#888"></div><div class="tt" style="letter-spacing:0.57px"><span style="color:#1a1a1a;text-shadow:none;font-size:12px;position:relative;top:1px">*mainfo</span></div><div class="cb" style="left:349px;top:2px"></div><svg class="a" style="left:349px;top:2px" width="15" height="15"><path d="M4.5 6.5L7.5 9.5L10.5 6.5" stroke="#2a2a2a" stroke-width="1.3" fill="none"/></svg><div class="cb" style="left:372px;top:2px"></div><svg class="a" style="left:372px;top:2px" width="15" height="15"><path d="M4.5 9L7.5 6L10.5 9" stroke="#2a2a2a" stroke-width="1.3" fill="none"/></svg><div class="cb" style="left:395px;top:2px"></div><svg class="a" style="left:395px;top:2px" width="15" height="15"><path d="M4.5 4.5L10.5 10.5M10.5 4.5L4.5 10.5" stroke="#2a2a2a" stroke-width="1.3" fill="none"/></svg></div><div class="a" style="left:1px;top:22px;width:415px;height:122px;background:linear-gradient(90deg,#e0dcfc 0%,#b8e4ff 22%,#70f0ff 40%,#00f4ff 57%,#30ccff 75%,#7aa8ff 92%,#8c8cff 100%)"></div><svg class="a" style="left:1px;top:22px" width="415" height="122"><defs><pattern id="dp1" x="1" y="1" width="8" height="8" patternUnits="userSpaceOnUse"><rect width="1" height="1" fill="#000"/></pattern></defs><rect width="415" height="122" fill="url(#dp1)" shape-rendering="crispEdges"/></svg><div class="a" style="left:10px;top:48px;width:100px;height:19px;background:linear-gradient(90deg,#dcdc90 0%,#ececa0 25%,#fff000 55%,#f8c000 80%,#e88000 100%);border-top:2px solid #000;border-left:2px solid #000;border-bottom:1px solid #fff;border-right:1px solid #fff"></div><svg class="a" style="left:10px;top:48px" width="100" height="19"><defs><pattern id="dp2" x="0" y="7" width="8" height="8" patternUnits="userSpaceOnUse"><rect width="1" height="1" fill="#000"/></pattern></defs><rect width="100" height="19" fill="url(#dp2)" shape-rendering="crispEdges"/></svg><div class="a" style="left:10px;top:49px;width:97px;text-align:right;font-size:13px;line-height:15px">0</div><div class="a" style="left:154px;top:48px;width:100px;height:19px;background:linear-gradient(90deg,#dcdc90 0%,#ececa0 25%,#fff000 55%,#f8c000 80%,#e88000 100%);border-top:2px solid #000;border-left:2px solid #000;border-bottom:1px solid #fff;border-right:1px solid #fff"></div><svg class="a" style="left:154px;top:48px" width="100" height="19"><defs><pattern id="dp3" x="0" y="7" width="8" height="8" patternUnits="userSpaceOnUse"><rect width="1" height="1" fill="#000"/></pattern></defs><rect width="100" height="19" fill="url(#dp3)" shape-rendering="crispEdges"/></svg><div class="a" style="left:154px;top:49px;width:97px;text-align:right;font-size:13px;line-height:15px">0</div><div class="a" style="left:299px;top:48px;width:99px;height:17px;background:linear-gradient(90deg,#d8d840 0%,#d8f800 40%,#a8f000 75%,#90e800 100%);border-bottom:1px solid #fff;border-right:1px solid #fff"></div><svg class="a" style="left:299px;top:48px" width="99" height="17"><defs><pattern id="dp4" x="7" y="7" width="8" height="8" patternUnits="userSpaceOnUse"><rect width="1" height="1" fill="#000"/></pattern></defs><rect width="99" height="17" fill="url(#dp4)" shape-rendering="crispEdges"/></svg><div class="a" style="left:299px;top:49px;width:96px;text-align:right;font-size:13px;line-height:15px">0</div><div class="a" style="left:11px;top:30px;font-size:13px;line-height:15px;letter-spacing:0.3px;white-space:nowrap;color:#111">A</div><div class="a" style="left:155px;top:30px;font-size:13px;line-height:15px;letter-spacing:0.3px;white-space:nowrap;color:#111">B</div><div class="a" style="left:299px;top:30px;font-size:13px;line-height:15px;letter-spacing:0.3px;white-space:nowrap;color:#111">A + B =</div><div class="a" style="left:296px;top:28px;width:5px;height:5px;background:#000"></div><div class="a" style="left:346px;top:28px;width:5px;height:5px;background:#000"></div><div class="a" style="left:395px;top:28px;width:5px;height:5px;background:#000"></div><div class="a" style="left:296px;top:45px;width:5px;height:5px;background:#000"></div><div class="a" style="left:395px;top:45px;width:5px;height:5px;background:#000"></div><div class="a" style="left:296px;top:60px;width:5px;height:5px;background:#000"></div><div class="a" style="left:346px;top:60px;width:5px;height:5px;background:#000"></div><div class="a" style="left:395px;top:60px;width:5px;height:5px;background:#000"></div><div class="a" style="left:314px;top:95px;width:74px;height:28px;background:linear-gradient(#8c8c8c,#e2e2e2);border-top:1px solid #fff;border-left:1px solid #fff;border-right:1px solid #777;border-bottom:1px solid #777"></div><svg class="a" style="left:314px;top:95px" width="74" height="28"><defs><pattern id="dp5" x="0" y="0" width="8" height="8" patternUnits="userSpaceOnUse"><rect width="1" height="1" fill="#000"/></pattern></defs><rect width="74" height="28" fill="url(#dp5)" shape-rendering="crispEdges"/></svg><div class="a" style="left:314px;top:101px;width:74px;text-align:center;font-size:13px;line-height:15px;letter-spacing:0.2px">Выход</div></div>
</body></html>
